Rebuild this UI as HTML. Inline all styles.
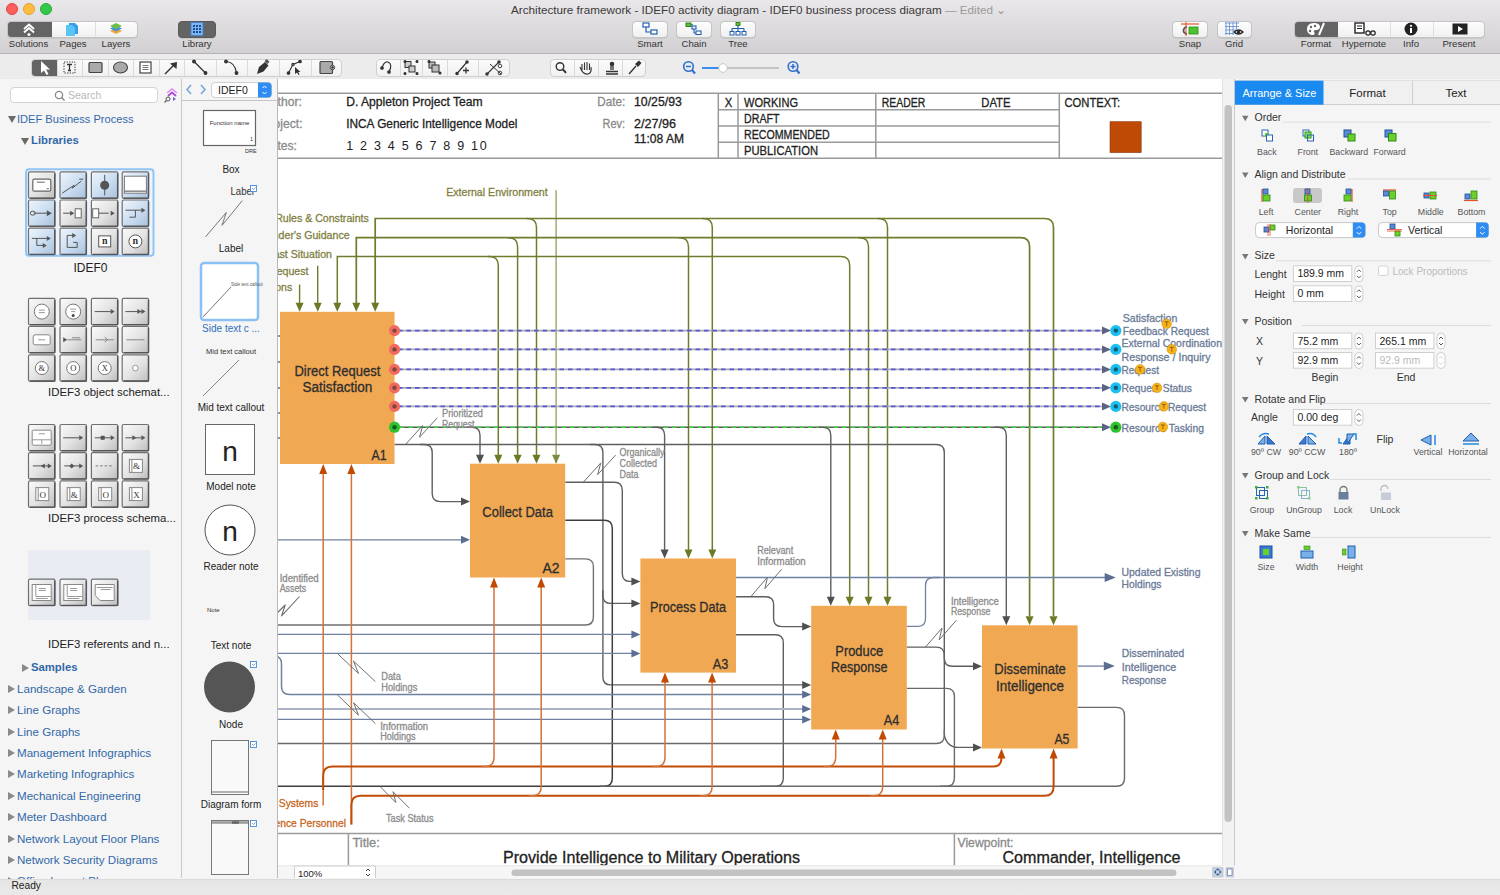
<!DOCTYPE html>
<html><head><meta charset="utf-8">
<style>
*{box-sizing:border-box}
body{margin:0;width:1500px;height:895px;overflow:hidden;position:relative;font-family:"Liberation Sans",sans-serif;background:#f4f4f4;color:#222}
.a{position:absolute}
.tb{position:absolute;left:0;top:0;width:1500px;height:54px;background:linear-gradient(#e9e7e9,#d2d0d2);border-bottom:1px solid #b4b2b4}
.tl{position:absolute;width:12px;height:12px;border-radius:6px;top:3px}
.title{position:absolute;top:3px;left:511px;white-space:nowrap;font-size:11.7px;color:#3a3a3a}
.seg{position:absolute;top:21px;height:17px;background:linear-gradient(#fdfdfd,#f0f0f0);border:1px solid #c4c4c4;border-radius:4px;box-shadow:0 0.5px 0 #bbb}
.lbl{position:absolute;top:38px;font-size:9.6px;color:#333;text-align:center}
.tb2{position:absolute;left:0;top:54px;width:1500px;height:25px;background:#ececec}
.grp{position:absolute;top:59px;height:18px;background:linear-gradient(#fbfbfb,#f1f1f1);border:1px solid #cfcfcf;border-radius:4px}
.sep{position:absolute;top:0;width:1px;height:16px;background:#dadada}
.left{position:absolute;left:0;top:79px;width:181px;height:799px;background:#f5f5f5}
.lib{position:absolute;left:182px;top:79px;width:96px;height:799px;background:#f5f5f5}
.vdiv{position:absolute;width:1px;background:#c8c8c8}
.tree{position:absolute;font-size:11.6px;color:#3268a8;white-space:nowrap}
.tri{position:absolute;width:0;height:0}
.status{position:absolute;left:0;top:879px;width:1500px;height:16px;background:linear-gradient(#e6e6e6,#e9e9e9);border-top:1px solid #dadada}
.rp{position:absolute;left:1233px;top:79px;width:267px;height:799px;background:#f5f5f5}
.sec{position:absolute;font-size:10px;color:#333;white-space:nowrap}
.ic{position:absolute;font-size:8.5px;color:#444;text-align:center;white-space:nowrap}
.inp{position:absolute;height:15px;background:#fff;border:1px solid #c8c8c8;font-size:10px;color:#333;padding-left:5px;line-height:13px}
.stp{position:absolute;width:10px;height:15px;border:1px solid #c8c8c8;border-radius:4px;background:#fff}
.sline{position:absolute;height:1px;background:#dcdcdc}
</style></head><body>
<!-- TOP TOOLBAR -->
<div class="tb">
  <div class="tl" style="left:6px;background:#fc605c;border:0.5px solid #e0443e"></div>
  <div class="tl" style="left:23px;background:#fdbc40;border:0.5px solid #dea236"></div>
  <div class="tl" style="left:40px;background:#34c84a;border:0.5px solid #27aa35"></div>
  <div class="title">Architecture framework - IDEF0 activity diagram - IDEF0 business process diagram <span style="color:#9a9a9a">— Edited ⌄</span></div>
</div>

<!-- toolbar buttons -->
<div class="seg" style="left:7px;width:131px;overflow:hidden">
  <div class="a" style="left:0;top:0;width:44px;height:15px;background:#646464"></div>
  <div class="a" style="left:87px;top:0;width:1px;height:15px;background:#dedede"></div>
</div>
<svg class="a" style="left:21px;top:21px" width="16" height="16" viewBox="0 0 16 16"><path d="M3 8 L8 3.5 L13 8" stroke="#fff" stroke-width="2" fill="none"/><path d="M3 11.5 L8 7 L13 11.5" stroke="#fff" stroke-width="2" fill="none"/><circle cx="8" cy="13.5" r="1.5" fill="#fff"/></svg>
<svg class="a" style="left:65px;top:22px" width="14" height="15" viewBox="0 0 14 15"><path d="M4 1 h6 l3 3 v8 h-9z" fill="#3a9ee6"/><path d="M1 3 h6 l3 3 v8 h-9z" fill="#58c4f7"/></svg>
<svg class="a" style="left:109px;top:22px" width="14" height="14" viewBox="0 0 14 14"><path d="M1 9 l6 -3 l6 3 l-6 3z" fill="#f0a830"/><path d="M1 6.5 l6 -3 l6 3 l-6 3z" fill="#4a90e2"/><path d="M1 4 l6 -3 l6 3 l-6 3z" fill="#6cc04a"/></svg>
<div class="lbl" style="left:0;width:57px">Solutions</div>
<div class="lbl" style="left:51px;width:44px">Pages</div>
<div class="lbl" style="left:94px;width:44px">Layers</div>
<div class="seg" style="left:178px;width:38px;background:#646464;border-color:#5a5a5a"></div>
<svg class="a" style="left:190px;top:22px" width="14" height="14" viewBox="0 0 14 14"><rect x="1" y="0.5" width="12" height="13" fill="#7cb6f2" stroke="#3f7fd0" stroke-width="0.8"/><g fill="#1f4f99"><rect x="3" y="3" width="2" height="2"/><rect x="6" y="3" width="2" height="2"/><rect x="9" y="3" width="2" height="2"/><rect x="3" y="6" width="2" height="2"/><rect x="6" y="6" width="2" height="2"/><rect x="9" y="6" width="2" height="2"/><rect x="3" y="9" width="2" height="2"/><rect x="6" y="9" width="2" height="2"/><rect x="9" y="9" width="2" height="2"/></g></svg>
<div class="lbl" style="left:167px;width:60px">Library</div>

<div class="seg" style="left:632px;width:36px"></div>
<svg class="a" style="left:641px;top:22px" width="18" height="14" viewBox="0 0 18 14"><rect x="2" y="1" width="6" height="4" fill="#fff" stroke="#1f5fb0" stroke-width="1.2"/><rect x="10" y="8" width="6" height="4" fill="#fff" stroke="#1f5fb0" stroke-width="1.2"/><path d="M5 5 v5 h5" stroke="#1f5fb0" stroke-width="1.2" fill="none"/></svg>
<div class="lbl" style="left:620px;width:60px">Smart</div>
<div class="seg" style="left:676px;width:36px"></div>
<svg class="a" style="left:685px;top:22px" width="18" height="14" viewBox="0 0 18 14"><rect x="1" y="1" width="5" height="3.5" fill="#5cbf3a" stroke="#2f7f1a" stroke-width="1"/><rect x="7" y="4" width="4" height="3" fill="#fff" stroke="#1f5fb0" stroke-width="1.1"/><rect x="11" y="9" width="5" height="3.5" fill="#fff" stroke="#1f5fb0" stroke-width="1.1"/><path d="M6 2.7 h2 M9 7 v4 h2" stroke="#1f5fb0" stroke-width="1.1" fill="none"/></svg>
<div class="lbl" style="left:664px;width:60px">Chain</div>
<div class="seg" style="left:720px;width:36px"></div>
<svg class="a" style="left:729px;top:22px" width="18" height="14" viewBox="0 0 18 14"><rect x="7" y="0.5" width="4" height="3" fill="#5cbf3a" stroke="#2f7f1a" stroke-width="0.9"/><path d="M9 3.5 v3 M3 6.5 h12 M3 6.5 v3 M9 6.5 v3 M15 6.5 v3" stroke="#1f5fb0" stroke-width="1.1" fill="none"/><rect x="1" y="9.5" width="4" height="3.5" fill="#fff" stroke="#1f5fb0" stroke-width="1"/><rect x="7" y="9.5" width="4" height="3.5" fill="#fff" stroke="#1f5fb0" stroke-width="1"/><rect x="13" y="9.5" width="4" height="3.5" fill="#fff" stroke="#1f5fb0" stroke-width="1"/></svg>
<div class="lbl" style="left:708px;width:60px">Tree</div>

<div class="seg" style="left:1172px;width:36px"></div>
<svg class="a" style="left:1180px;top:22px" width="20" height="14" viewBox="0 0 20 14"><path d="M1 2 h18" stroke="#e8502a" stroke-width="1.2"/><path d="M7 5 a3.5 3.5 0 1 0 0 7" stroke="#555" stroke-width="1.8" fill="none"/><path d="M6 0 v14" stroke="#e8502a" stroke-width="1"/><rect x="9" y="5" width="9" height="7" fill="#4cc22e" stroke="#2a8a18" stroke-width="0.8"/></svg>
<div class="lbl" style="left:1160px;width:60px">Snap</div>
<div class="seg" style="left:1217px;width:35px"></div>
<svg class="a" style="left:1224px;top:22px" width="20" height="14" viewBox="0 0 20 14"><g stroke="#5a8ad8" stroke-width="0.8"><path d="M1 1 h14 M1 4.5 h14 M1 8 h11 M1 11.5 h9 M2 0 v13 M5.5 0 v13 M9 0 v13 M12.5 0 v7"/></g><path d="M10 10 q4.5 -4 9 0 q-4.5 4 -9 0z" fill="#fff" stroke="#222" stroke-width="1.2"/><circle cx="14.5" cy="10" r="1.6" fill="#222"/></svg>
<div class="lbl" style="left:1204px;width:60px">Grid</div>

<div class="seg" style="left:1294px;width:191px;overflow:hidden">
  <div class="a" style="left:0;top:0;width:43px;height:15px;background:#646464"></div>
  <div class="a" style="left:95px;top:0;width:1px;height:15px;background:#dedede"></div>
  <div class="a" style="left:138px;top:0;width:1px;height:15px;background:#dedede"></div>
</div>
<svg class="a" style="left:1306px;top:22px" width="20" height="14" viewBox="0 0 20 14"><path d="M8 1 C3 1 1 4 1 7 C1 11 4 13 7 13 C9 13 9 11 8 10 C7 9 8 8 10 8 C13 8 14 6 14 5 C14 2 11 1 8 1z" fill="#fff"/><circle cx="5" cy="5" r="1.2" fill="#646464"/><circle cx="9" cy="4" r="1.2" fill="#646464"/><circle cx="4" cy="9" r="1.2" fill="#646464"/><path d="M13 13 L18 1" stroke="#fff" stroke-width="2"/></svg>
<div class="lbl" style="left:1286px;width:60px">Format</div>
<svg class="a" style="left:1354px;top:22px" width="22" height="14" viewBox="0 0 22 14"><rect x="1" y="1" width="9" height="10" fill="#fff" stroke="#222" stroke-width="1.4"/><path d="M3 4 h5 M3 6.5 h5" stroke="#222" stroke-width="1"/><circle cx="14" cy="11" r="2.2" fill="none" stroke="#222" stroke-width="1.2"/><circle cx="19" cy="11" r="2.2" fill="none" stroke="#222" stroke-width="1.2"/></svg>
<div class="lbl" style="left:1334px;width:60px">Hypernote</div>
<svg class="a" style="left:1404px;top:22px" width="14" height="14" viewBox="0 0 14 14"><circle cx="7" cy="7" r="6.5" fill="#222"/><rect x="6" y="6" width="2" height="5" fill="#fff"/><circle cx="7" cy="3.8" r="1.1" fill="#fff"/></svg>
<div class="lbl" style="left:1381px;width:60px">Info</div>
<svg class="a" style="left:1452px;top:23px" width="16" height="12" viewBox="0 0 16 12"><rect x="0.5" y="0.5" width="15" height="11" fill="#222"/><path d="M6 3 L11 6 L6 9z" fill="#fff"/></svg>
<div class="lbl" style="left:1429px;width:60px">Present</div>

<!-- SECOND TOOLBAR -->
<div class="tb2"></div>
<div class="grp" style="left:31px;width:311px;overflow:hidden"><div class="a" style="left:0;top:0;width:24.700000000000003px;height:16px;background:#646464"></div><div class="sep" style="left:24.700000000000003px"></div><div class="sep" style="left:50.400000000000006px"></div><div class="sep" style="left:76px"></div><div class="sep" style="left:101px"></div><div class="sep" style="left:126.6px"></div><div class="sep" style="left:152px"></div><div class="sep" style="left:183.6px"></div><div class="sep" style="left:215px"></div><div class="sep" style="left:246.60000000000002px"></div><div class="sep" style="left:278.7px"></div></div><div class="grp" style="left:376px;width:134px;overflow:hidden"><div class="sep" style="left:22.600000000000023px"></div><div class="sep" style="left:45.39999999999998px"></div><div class="sep" style="left:70.39999999999998px"></div><div class="sep" style="left:101.39999999999998px"></div></div><div class="grp" style="left:550px;width:96px;overflow:hidden"><div class="sep" style="left:23.399999999999977px"></div><div class="sep" style="left:47px"></div><div class="sep" style="left:71px"></div></div>
<svg class="a" style="left:0;top:54px" width="1500" height="25" viewBox="0 54 1500 25">
<g fill="none" stroke="#333" stroke-width="1.3">
<!-- pointer (white on dark) -->
<path d="M41 61 L41 73 L44 70.5 L46.5 75 L48.5 74 L46 69.5 L50 69.5 Z" fill="#fff" stroke="none"/>
<!-- text box -->
<rect x="64" y="62" width="11" height="11" stroke-dasharray="1.3 1.3" stroke-width="1"/>
<path d="M67 64.5 h5 M69.5 64.5 v6 M68 70.5 h3" stroke-width="1.3"/>
<!-- rect -->
<rect x="89" y="62.5" width="13" height="10" fill="#aaa" stroke="#444" stroke-width="1.2" rx="1"/>
<!-- ellipse -->
<ellipse cx="120.5" cy="67.5" rx="7" ry="5.5" fill="#aaa" stroke="#444" stroke-width="1.1"/>
<!-- list -->
<rect x="140" y="62" width="11" height="11" fill="#fff" stroke="#444" stroke-width="1.2"/>
<path d="M142.5 65.5 h6 M142.5 67.5 h6 M142.5 69.5 h6" stroke="#777" stroke-width="1"/>
<!-- arrow -->
<path d="M165 74 L176 63" stroke-width="1.4"/><path d="M177 62 L176.5 69 L170 63.5 Z" fill="#333" stroke="none"/>
<!-- line -->
<path d="M194 61.5 L205.5 73" stroke-width="1.2"/><circle cx="194" cy="61.5" r="1.3" fill="#333"/><circle cx="205.5" cy="73" r="1.3" fill="#333"/>
<!-- arc -->
<path d="M226 61.5 Q235 62 236.5 73" stroke-width="1.2"/><circle cx="226" cy="61.5" r="1.3" fill="#333"/><circle cx="236.5" cy="73" r="1.3" fill="#333"/>
<!-- pen -->
<path d="M257 74 L259 67 L265 62 L268.5 65.5 L263.5 71.5 Z" fill="#333" stroke="none"/><rect x="265" y="60" width="4" height="3" transform="rotate(45 267 61.5)" fill="#555" stroke="none"/>
<!-- bezier -->
<path d="M288.5 73 L293 64.5 L300 61.5" stroke-width="1.1"/><circle cx="288.5" cy="73" r="1.2" fill="#333"/><circle cx="300" cy="61.5" r="1.2" fill="#333"/><circle cx="293" cy="64.5" r="1.1" fill="#fff"/>
<path d="M295 67 L295 74 L297 72.5 L298.5 75 L299.5 74.5 L298.3 72 L300.5 72 Z" fill="#333" stroke="none"/>
<!-- rect with circle -->
<rect x="320" y="61.5" width="12.5" height="12" fill="#aaa" stroke="#444" stroke-width="1.2" rx="1"/><circle cx="332.5" cy="67.5" r="2.2" fill="#fff" stroke="#444" stroke-width="1"/><circle cx="332.5" cy="67.5" r="0.7" fill="#444"/>

<!-- group 2 -->
<path d="M382 68 Q384 61 388 62 Q393 64 389 72" stroke-width="1.2"/><circle cx="382" cy="68" r="1.2" fill="#333"/><circle cx="389" cy="72" r="1.2" fill="#333"/>
<rect x="405" y="61.5" width="6" height="6" fill="#ccc" stroke-width="1"/><rect x="409" y="66" width="6" height="6" fill="#ccc" stroke-width="1"/><circle cx="405" cy="61.5" r="0.9" fill="#333"/><circle cx="417" cy="61.5" r="0.9" fill="#333"/><circle cx="405" cy="73.5" r="0.9" fill="#333"/><circle cx="417" cy="73.5" r="0.9" fill="#333"/>
<rect x="429" y="62" width="6" height="6" fill="#bbb" stroke-width="1"/><rect x="432" y="65" width="7" height="7" fill="#bbb" stroke-width="1"/><circle cx="429" cy="61.5" r="0.9" fill="#333"/><circle cx="440" cy="73" r="0.9" fill="#333"/>
<path d="M457 73.5 L467 62" stroke-width="1.2"/><circle cx="457" cy="73.5" r="1.1" fill="#333"/><circle cx="467" cy="62" r="1.1" fill="#333"/><path d="M466 67.5 v6 M463 70.5 h6" stroke-width="1.3"/>
<path d="M487 74 L499 62" stroke-width="1.1"/><circle cx="487" cy="74" r="1.1" fill="#333"/><circle cx="499" cy="62" r="1.1" fill="#333"/><path d="M490 64 L501 74" stroke-width="1"/><circle cx="500" cy="66" r="1.8" stroke-width="0.9"/><circle cx="500" cy="73" r="1.8" stroke-width="0.9"/>

<!-- group 3 -->
<circle cx="560" cy="66.5" r="3.8" stroke-width="1.4"/><path d="M563 69.5 L566 72.8" stroke-width="2"/>
<path d="M582 70 L582 64 M584.5 70 L584.5 62.5 M587 70 L587 62 M589.5 70 L589.5 63.5 M580 67 Q583 75 588 74 Q592 73 591 67" stroke-width="1.1"/>
<path d="M606 74 h12 M606 71.5 h12" stroke-width="1.6"/><path d="M611 70 v-4 M613 70 v-4" stroke-width="1.3"/><circle cx="612" cy="64" r="2.3" fill="#333" stroke="none"/>
<path d="M629 74 L636 66" stroke-width="1.4"/><path d="M635 64 L639 60.5 L641.5 63 L638 67 Z" fill="#333" stroke="none"/>

<!-- zoom -->
<circle cx="688.5" cy="66.5" r="4.8" stroke="#2f6fd0" stroke-width="1.6"/><path d="M686 66.5 h5" stroke="#2f6fd0" stroke-width="1.5"/><path d="M692 70 L695 73.5" stroke="#2f6fd0" stroke-width="2.2"/>
<path d="M702 68 h21" stroke="#3a8ef0" stroke-width="2"/><path d="M723 68 h56" stroke="#c4c4c4" stroke-width="2"/>
<circle cx="723" cy="68" r="4.3" fill="#fff" stroke="#bdbdbd" stroke-width="0.8"/>
<circle cx="793" cy="66.5" r="4.8" stroke="#2f6fd0" stroke-width="1.6"/><path d="M790.5 66.5 h5 M793 64 v5" stroke="#2f6fd0" stroke-width="1.5"/><path d="M796.5 70 L799.5 73.5" stroke="#2f6fd0" stroke-width="2.2"/>
</g></svg>
<!-- LEFT -->
<div class="left"></div>
<div class="a" style="left:10px;top:87px;width:148px;height:16px;background:#fff;border:1px solid #d4d4d4;border-radius:4px"></div>
<svg class="a" style="left:54px;top:90px" width="12" height="12" viewBox="0 0 12 12"><circle cx="5" cy="5" r="3.6" fill="none" stroke="#888" stroke-width="1.3"/><path d="M7.6 7.6 L10.5 10.5" stroke="#888" stroke-width="1.4"/></svg>
<div class="a" style="left:68px;top:89px;font-size:10.5px;color:#b8b8b8">Search</div>
<svg class="a" style="left:163px;top:86px" width="16" height="18" viewBox="0 0 16 18"><path d="M4 7 L9 3 L14 7" stroke="#d98ef0" stroke-width="1.6" fill="none"/><path d="M5 10 L9 6.5 L13 10" stroke="#b04ad8" stroke-width="1.8" fill="none"/><circle cx="5" cy="13" r="2" fill="none" stroke="#555" stroke-width="1"/><path d="M3.5 14.5 L1.5 16.5" stroke="#555" stroke-width="1.1"/><path d="M10 11 L13 13 L10 15z" fill="#7a5ad8"/></svg>
<div class="tri a" style="left:8px;top:116px;border-left:4px solid transparent;border-right:4px solid transparent;border-top:7px solid #6a6a6a"></div>
<div class="tree" style="left:17px;top:112.5px;font-size:11.1px">IDEF Business Process</div>
<div class="tri a" style="left:21px;top:138px;border-left:4px solid transparent;border-right:4px solid transparent;border-top:7px solid #6a6a6a"></div>
<div class="tree" style="left:31px;top:134px;font-size:11.3px;font-weight:bold">Libraries</div>
<svg class="a" style="left:0;top:160px" width="181" height="460" viewBox="0 160 181 460"><defs><linearGradient id="gg" x1="0" y1="0" x2="1" y2="1"><stop offset="0" stop-color="#fbfbfb"/><stop offset="0.55" stop-color="#e2e2e2"/><stop offset="1" stop-color="#bdbdbd"/></linearGradient><linearGradient id="gb" x1="0" y1="0" x2="1" y2="1"><stop offset="0" stop-color="#f0f6fd"/><stop offset="0.55" stop-color="#c9dcf0"/><stop offset="1" stop-color="#a9c1dc"/></linearGradient></defs><rect x="26.1" y="169.2" width="127.4" height="86.6" rx="3" fill="#eef3f9" stroke="#8ec4f6" stroke-width="2"/><rect x="28.5" y="171.9" width="26.5" height="26.5" rx="1.5" fill="url(#gg)" stroke="#6f6f6f" stroke-width="1.2"/><path d="M54.7 173.4 V198.1 H30.0" stroke="#555" stroke-width="1.3" fill="none"/><rect x="32.8" y="179.2" width="18" height="12" rx="1.5" fill="#fff" stroke="#666" stroke-width="1.2"/><path d="M36.8 182.2 h8 M46.8 188.7 h2" stroke="#666" stroke-width="1"/><rect x="60.0" y="171.9" width="26.5" height="26.5" rx="1.5" fill="url(#gb)" stroke="#6f6f6f" stroke-width="1.2"/><path d="M86.2 173.4 V198.1 H61.5" stroke="#555" stroke-width="1.3" fill="none"/><path d="M62.2 193.2 L74.2 185.2 L72.2 188.2 L81.2 181.2 M79.2 179.2 h4" stroke="#555" fill="none" stroke-width="1"/><rect x="91.4" y="171.9" width="26.5" height="26.5" rx="1.5" fill="url(#gb)" stroke="#6f6f6f" stroke-width="1.2"/><path d="M117.6 173.4 V198.1 H92.9" stroke="#555" stroke-width="1.3" fill="none"/><path d="M104.7 174.9 V195.4" stroke="#555" fill="none" stroke-width="1"/><circle cx="104.7" cy="185.2" r="4.5" fill="#555"/><rect x="122.2" y="171.9" width="26.5" height="26.5" rx="1.5" fill="url(#gb)" stroke="#6f6f6f" stroke-width="1.2"/><path d="M148.4 173.4 V198.1 H123.7" stroke="#555" stroke-width="1.3" fill="none"/><rect x="124.4" y="176.2" width="22" height="17" fill="#fff" stroke="#777" stroke-width="1"/><path d="M124.4 191.2 h22" stroke="#888" stroke-width="1.5"/><rect x="28.5" y="200.0" width="26.5" height="26.5" rx="1.5" fill="url(#gb)" stroke="#6f6f6f" stroke-width="1.2"/><path d="M54.7 201.5 V226.2 H30.0" stroke="#555" stroke-width="1.3" fill="none"/><path d="M33.8 213.2 h14" stroke="#555" fill="none" stroke-width="1"/><path d="M51.8 213.2 l-5 -3 v6z" fill="#555"/><ellipse cx="32.8" cy="213.2" rx="2.5" ry="2" stroke="#555" fill="none" stroke-width="1"/><rect x="60.0" y="200.0" width="26.5" height="26.5" rx="1.5" fill="url(#gg)" stroke="#6f6f6f" stroke-width="1.2"/><path d="M86.2 201.5 V226.2 H61.5" stroke="#555" stroke-width="1.3" fill="none"/><path d="M63.2 213.2 h10" stroke="#555" fill="none" stroke-width="1"/><path d="M74.2 213.2 l-4 -2.5 v5z" fill="#555"/><rect x="75.2" y="208.8" width="6" height="9" fill="#fff" stroke="#666"/><rect x="91.4" y="200.0" width="26.5" height="26.5" rx="1.5" fill="url(#gg)" stroke="#6f6f6f" stroke-width="1.2"/><path d="M117.6 201.5 V226.2 H92.9" stroke="#555" stroke-width="1.3" fill="none"/><rect x="92.7" y="208.8" width="6" height="9" fill="#fff" stroke="#666"/><path d="M98.7 213.2 h10" stroke="#555" fill="none" stroke-width="1"/><path d="M114.7 213.2 l-4 -2.5 v5z" fill="#555"/><rect x="122.2" y="200.0" width="26.5" height="26.5" rx="1.5" fill="url(#gb)" stroke="#6f6f6f" stroke-width="1.2"/><path d="M148.4 201.5 V226.2 H123.7" stroke="#555" stroke-width="1.3" fill="none"/><path d="M125.4 210.2 h16 M135.4 210.2 v7 h-6" stroke="#555" fill="none" stroke-width="1"/><path d="M145.4 210.2 l-4 -2.5 v5z" fill="#555"/><rect x="28.5" y="228.2" width="26.5" height="26.5" rx="1.5" fill="url(#gb)" stroke="#6f6f6f" stroke-width="1.2"/><path d="M54.7 229.7 V254.4 H30.0" stroke="#555" stroke-width="1.3" fill="none"/><path d="M31.8 238.4 h18 M36.8 238.4 v7 h8" stroke="#555" fill="none" stroke-width="1"/><path d="M50.8 238.4 l-4 -2.5 v5z M46.8 245.4 l-4 -2.5 v5z" fill="#555"/><rect x="60.0" y="228.2" width="26.5" height="26.5" rx="1.5" fill="url(#gb)" stroke="#6f6f6f" stroke-width="1.2"/><path d="M86.2 229.7 V254.4 H61.5" stroke="#555" stroke-width="1.3" fill="none"/><path d="M67.2 247.4 v-12 h5 M67.2 247.4 h10 v-5 h-4" stroke="#555" fill="none" stroke-width="1"/><path d="M76.2 235.4 l-4 -2.5 v5z" fill="#555"/><rect x="91.4" y="228.2" width="26.5" height="26.5" rx="1.5" fill="url(#gg)" stroke="#6f6f6f" stroke-width="1.2"/><path d="M117.6 229.7 V254.4 H92.9" stroke="#555" stroke-width="1.3" fill="none"/><rect x="98.7" y="235.9" width="12" height="11" fill="#fff" stroke="#555"/><text x="104.7" y="244.4" font-size="10" font-family='"Liberation Serif",serif' font-weight="bold" fill="#333" text-anchor="middle">n</text><rect x="122.2" y="228.2" width="26.5" height="26.5" rx="1.5" fill="url(#gg)" stroke="#6f6f6f" stroke-width="1.2"/><path d="M148.4 229.7 V254.4 H123.7" stroke="#555" stroke-width="1.3" fill="none"/><circle cx="135.4" cy="241.4" r="6.5" fill="#fff" stroke="#555"/><text x="135.4" y="244.4" font-size="10" font-family='"Liberation Serif",serif' font-weight="bold" fill="#333" text-anchor="middle">n</text><rect x="28.5" y="298.4" width="26.5" height="26.5" rx="1.5" fill="url(#gg)" stroke="#6f6f6f" stroke-width="1.2"/><path d="M54.7 299.9 V324.6 H30.0" stroke="#555" stroke-width="1.3" fill="none"/><circle cx="41.8" cy="311.6" r="7.5" fill="#fff" stroke="#777"/><path d="M38.8 310.1 h6 M38.8 312.6 h6" stroke="#999"/><rect x="60.0" y="298.4" width="26.5" height="26.5" rx="1.5" fill="url(#gg)" stroke="#6f6f6f" stroke-width="1.2"/><path d="M86.2 299.9 V324.6 H61.5" stroke="#555" stroke-width="1.3" fill="none"/><circle cx="73.2" cy="311.6" r="7.5" fill="#fff" stroke="#777"/><path d="M70.2 309.1 h6 M71.2 311.6 h4" stroke="#999"/><circle cx="73.2" cy="315.6" r="1.5" fill="#444"/><rect x="91.4" y="298.4" width="26.5" height="26.5" rx="1.5" fill="url(#gg)" stroke="#6f6f6f" stroke-width="1.2"/><path d="M117.6 299.9 V324.6 H92.9" stroke="#555" stroke-width="1.3" fill="none"/><path d="M94.7 311.6 h16" stroke="#555" fill="none" stroke-width="1"/><path d="M114.7 311.6 l-4 -2.5 v5z" fill="#555"/><rect x="122.2" y="298.4" width="26.5" height="26.5" rx="1.5" fill="url(#gg)" stroke="#6f6f6f" stroke-width="1.2"/><path d="M148.4 299.9 V324.6 H123.7" stroke="#555" stroke-width="1.3" fill="none"/><path d="M125.4 311.6 h16" stroke="#555" fill="none" stroke-width="1"/><path d="M141.4 311.6 l-4 -2.5 v5z M145.4 311.6 l-4 -2.5 v5z" fill="#555"/><rect x="28.5" y="326.5" width="26.5" height="26.5" rx="1.5" fill="url(#gg)" stroke="#6f6f6f" stroke-width="1.2"/><path d="M54.7 328.0 V352.7 H30.0" stroke="#555" stroke-width="1.3" fill="none"/><rect x="33.2" y="334.8" width="17" height="10" rx="2" fill="#fff" stroke="#888"/><path d="M38.2 339.8 h7" stroke="#999"/><rect x="60.0" y="326.5" width="26.5" height="26.5" rx="1.5" fill="url(#gg)" stroke="#6f6f6f" stroke-width="1.2"/><path d="M86.2 328.0 V352.7 H61.5" stroke="#555" stroke-width="1.3" fill="none"/><path d="M63.2 337.2 l4 2.5 l-4 2.5z" fill="#555"/><path d="M67.2 339.8 h14 M72.2 337.8 h8" stroke="#888"/><rect x="91.4" y="326.5" width="26.5" height="26.5" rx="1.5" fill="url(#gg)" stroke="#6f6f6f" stroke-width="1.2"/><path d="M117.6 328.0 V352.7 H92.9" stroke="#555" stroke-width="1.3" fill="none"/><path d="M95.7 339.8 h18 M104.7 337.2 l3 2.5 l-3 2.5" stroke="#888" fill="none"/><rect x="122.2" y="326.5" width="26.5" height="26.5" rx="1.5" fill="url(#gg)" stroke="#6f6f6f" stroke-width="1.2"/><path d="M148.4 328.0 V352.7 H123.7" stroke="#555" stroke-width="1.3" fill="none"/><path d="M126.4 339.8 h18" stroke="#888"/><rect x="28.5" y="354.8" width="26.5" height="26.5" rx="1.5" fill="url(#gg)" stroke="#6f6f6f" stroke-width="1.2"/><path d="M54.7 356.3 V381.0 H30.0" stroke="#555" stroke-width="1.3" fill="none"/><circle cx="41.8" cy="368.1" r="6.5" fill="#fff" stroke="#777"/><text x="41.8" y="371.1" font-size="8.5" font-family='"Liberation Serif",serif' fill="#333" text-anchor="middle">&amp;</text><rect x="60.0" y="354.8" width="26.5" height="26.5" rx="1.5" fill="url(#gg)" stroke="#6f6f6f" stroke-width="1.2"/><path d="M86.2 356.3 V381.0 H61.5" stroke="#555" stroke-width="1.3" fill="none"/><circle cx="73.2" cy="368.1" r="6.5" fill="#fff" stroke="#777"/><text x="73.2" y="371.1" font-size="8.5" font-family='"Liberation Serif",serif' fill="#333" text-anchor="middle">O</text><rect x="91.4" y="354.8" width="26.5" height="26.5" rx="1.5" fill="url(#gg)" stroke="#6f6f6f" stroke-width="1.2"/><path d="M117.6 356.3 V381.0 H92.9" stroke="#555" stroke-width="1.3" fill="none"/><circle cx="104.7" cy="368.1" r="6.5" fill="#fff" stroke="#777"/><text x="104.7" y="371.1" font-size="8.5" font-family='"Liberation Serif",serif' fill="#333" text-anchor="middle">X</text><rect x="122.2" y="354.8" width="26.5" height="26.5" rx="1.5" fill="url(#gg)" stroke="#6f6f6f" stroke-width="1.2"/><path d="M148.4 356.3 V381.0 H123.7" stroke="#555" stroke-width="1.3" fill="none"/><circle cx="135.4" cy="368.1" r="2.8" fill="#fff" stroke="#999"/><rect x="28.5" y="424.5" width="26.5" height="26.5" rx="1.5" fill="url(#gg)" stroke="#6f6f6f" stroke-width="1.2"/><path d="M54.7 426.0 V450.7 H30.0" stroke="#555" stroke-width="1.3" fill="none"/><rect x="32.2" y="430.2" width="19" height="15" rx="1" fill="#fff" stroke="#888"/><path d="M32.2 439.8 h19 M41.8 439.8 v4 M38.8 433.8 h6" stroke="#999"/><rect x="60.0" y="424.5" width="26.5" height="26.5" rx="1.5" fill="url(#gg)" stroke="#6f6f6f" stroke-width="1.2"/><path d="M86.2 426.0 V450.7 H61.5" stroke="#555" stroke-width="1.3" fill="none"/><path d="M63.2 437.8 h16" stroke="#555" fill="none" stroke-width="1"/><path d="M83.2 437.8 l-4 -2.5 v5z" fill="#555"/><rect x="91.4" y="424.5" width="26.5" height="26.5" rx="1.5" fill="url(#gg)" stroke="#6f6f6f" stroke-width="1.2"/><path d="M117.6 426.0 V450.7 H92.9" stroke="#555" stroke-width="1.3" fill="none"/><path d="M94.7 437.8 h16" stroke="#555" fill="none" stroke-width="1"/><rect x="100.7" y="435.8" width="4" height="4" fill="#555"/><path d="M114.7 437.8 l-4 -2.5 v5z" fill="#555"/><rect x="122.2" y="424.5" width="26.5" height="26.5" rx="1.5" fill="url(#gg)" stroke="#6f6f6f" stroke-width="1.2"/><path d="M148.4 426.0 V450.7 H123.7" stroke="#555" stroke-width="1.3" fill="none"/><path d="M125.4 437.8 h16" stroke="#555" fill="none" stroke-width="1"/><path d="M136.4 437.8 l-4 -2.5 v5z M145.4 437.8 l-4 -2.5 v5z" fill="#555"/><rect x="28.5" y="452.6" width="26.5" height="26.5" rx="1.5" fill="url(#gg)" stroke="#6f6f6f" stroke-width="1.2"/><path d="M54.7 454.1 V478.8 H30.0" stroke="#555" stroke-width="1.3" fill="none"/><path d="M32.8 465.9 h16" stroke="#555" fill="none" stroke-width="1"/><path d="M40.8 465.9 l4 -2.5 v5z M51.8 465.9 l-4 -2.5 v5z" fill="#555"/><rect x="60.0" y="452.6" width="26.5" height="26.5" rx="1.5" fill="url(#gg)" stroke="#6f6f6f" stroke-width="1.2"/><path d="M86.2 454.1 V478.8 H61.5" stroke="#555" stroke-width="1.3" fill="none"/><path d="M64.2 465.9 h16" stroke="#555" fill="none" stroke-width="1"/><path d="M69.2 465.9 l2.5 -2.5 l2.5 2.5 l-2.5 2.5z M83.2 465.9 l-4 -2.5 v5z" fill="#555"/><rect x="91.4" y="452.6" width="26.5" height="26.5" rx="1.5" fill="url(#gg)" stroke="#6f6f6f" stroke-width="1.2"/><path d="M117.6 454.1 V478.8 H92.9" stroke="#555" stroke-width="1.3" fill="none"/><path d="M95.7 465.9 h18" stroke="#777" stroke-dasharray="2.5 2"/><rect x="122.2" y="452.6" width="26.5" height="26.5" rx="1.5" fill="url(#gg)" stroke="#6f6f6f" stroke-width="1.2"/><path d="M148.4 454.1 V478.8 H123.7" stroke="#555" stroke-width="1.3" fill="none"/><rect x="129.4" y="459.4" width="13" height="13" fill="#fff" stroke="#888"/><path d="M131.9 459.4 v13" stroke="#888"/><text x="136.4" y="469.4" font-size="9" font-family='"Liberation Serif",serif' fill="#333" text-anchor="middle">&amp;</text><rect x="28.5" y="480.9" width="26.5" height="26.5" rx="1.5" fill="url(#gg)" stroke="#6f6f6f" stroke-width="1.2"/><path d="M54.7 482.4 V507.1 H30.0" stroke="#555" stroke-width="1.3" fill="none"/><rect x="35.8" y="487.6" width="13" height="13" fill="#fff" stroke="#888"/><path d="M38.2 487.6 v13" stroke="#888"/><text x="42.8" y="497.6" font-size="9" font-family='"Liberation Serif",serif' fill="#333" text-anchor="middle">O</text><rect x="60.0" y="480.9" width="26.5" height="26.5" rx="1.5" fill="url(#gg)" stroke="#6f6f6f" stroke-width="1.2"/><path d="M86.2 482.4 V507.1 H61.5" stroke="#555" stroke-width="1.3" fill="none"/><rect x="67.2" y="487.6" width="13" height="13" fill="#fff" stroke="#888"/><path d="M69.8 487.6 v13" stroke="#888"/><text x="74.2" y="497.6" font-size="9" font-family='"Liberation Serif",serif' fill="#333" text-anchor="middle">&amp;</text><rect x="91.4" y="480.9" width="26.5" height="26.5" rx="1.5" fill="url(#gg)" stroke="#6f6f6f" stroke-width="1.2"/><path d="M117.6 482.4 V507.1 H92.9" stroke="#555" stroke-width="1.3" fill="none"/><rect x="98.7" y="487.6" width="13" height="13" fill="#fff" stroke="#888"/><path d="M101.2 487.6 v13" stroke="#888"/><text x="105.7" y="497.6" font-size="9" font-family='"Liberation Serif",serif' fill="#333" text-anchor="middle">O</text><rect x="122.2" y="480.9" width="26.5" height="26.5" rx="1.5" fill="url(#gg)" stroke="#6f6f6f" stroke-width="1.2"/><path d="M148.4 482.4 V507.1 H123.7" stroke="#555" stroke-width="1.3" fill="none"/><rect x="129.4" y="487.6" width="13" height="13" fill="#fff" stroke="#888"/><path d="M131.9 487.6 v13" stroke="#888"/><text x="136.4" y="497.6" font-size="9" font-family='"Liberation Serif",serif' fill="#333" text-anchor="middle">X</text><rect x="28" y="550" width="122" height="82" fill="#e9edf3"/><rect x="28.5" y="579.2" width="26.5" height="26.5" rx="1.5" fill="url(#gg)" stroke="#6f6f6f" stroke-width="1.2"/><path d="M54.7 580.7 V605.4 H30.0" stroke="#555" stroke-width="1.3" fill="none"/><rect x="32.2" y="584.5" width="19" height="16" fill="#fff" stroke="#888"/><path d="M35.8 584.5 v12 h15 M38.8 588.5 h7 M38.8 590.5 h7 M35.8 598.5 h12" stroke="#999" fill="none"/><rect x="60.0" y="579.2" width="26.5" height="26.5" rx="1.5" fill="url(#gg)" stroke="#6f6f6f" stroke-width="1.2"/><path d="M86.2 580.7 V605.4 H61.5" stroke="#555" stroke-width="1.3" fill="none"/><rect x="63.8" y="584.5" width="19" height="16" fill="#fff" stroke="#888"/><path d="M67.2 584.5 v12 h15 M70.2 588.5 h7 M70.2 590.5 h7 M67.2 598.5 h12" stroke="#999" fill="none"/><rect x="91.4" y="579.2" width="26.5" height="26.5" rx="1.5" fill="url(#gg)" stroke="#6f6f6f" stroke-width="1.2"/><path d="M117.6 580.7 V605.4 H92.9" stroke="#555" stroke-width="1.3" fill="none"/><path d="M95.2 584.5 h19 v16 h-14 l-5 -5z" fill="#fff" stroke="#888"/><path d="M96.7 587.5 h16 M100.7 589.5 h10" stroke="#999"/></svg><div class="a" style="left:0;top:261px;width:181px;text-align:center;font-size:12px;color:#222">IDEF0</div><div class="a" style="left:48px;top:386px;font-size:11.4px;color:#222">IDEF3 object schemat...</div><div class="a" style="left:48px;top:512px;font-size:11.4px;color:#222">IDEF3 process schema...</div><div class="a" style="left:48px;top:638px;font-size:11.4px;color:#222">IDEF3 referents and n...</div><div class="tri a" style="left:22px;top:664px;border-top:4px solid transparent;border-bottom:4px solid transparent;border-left:7px solid #8a8a8a"></div><div class="tree" style="left:31px;top:661px;font-size:11.3px;font-weight:bold">Samples</div><div class="tri a" style="left:8px;top:685.0px;border-top:4px solid transparent;border-bottom:4px solid transparent;border-left:7px solid #8a8a8a"></div><div class="tree" style="left:17px;top:682.0px">Landscape &amp; Garden</div><div class="tri a" style="left:8px;top:706.4px;border-top:4px solid transparent;border-bottom:4px solid transparent;border-left:7px solid #8a8a8a"></div><div class="tree" style="left:17px;top:703.4px">Line Graphs</div><div class="tri a" style="left:8px;top:727.7px;border-top:4px solid transparent;border-bottom:4px solid transparent;border-left:7px solid #8a8a8a"></div><div class="tree" style="left:17px;top:724.7px">Line Graphs</div><div class="tri a" style="left:8px;top:749.0px;border-top:4px solid transparent;border-bottom:4px solid transparent;border-left:7px solid #8a8a8a"></div><div class="tree" style="left:17px;top:746.0px">Management Infographics</div><div class="tri a" style="left:8px;top:770.4px;border-top:4px solid transparent;border-bottom:4px solid transparent;border-left:7px solid #8a8a8a"></div><div class="tree" style="left:17px;top:767.4px">Marketing Infographics</div><div class="tri a" style="left:8px;top:791.8px;border-top:4px solid transparent;border-bottom:4px solid transparent;border-left:7px solid #8a8a8a"></div><div class="tree" style="left:17px;top:788.8px">Mechanical Engineering</div><div class="tri a" style="left:8px;top:813.1px;border-top:4px solid transparent;border-bottom:4px solid transparent;border-left:7px solid #8a8a8a"></div><div class="tree" style="left:17px;top:810.1px">Meter Dashboard</div><div class="tri a" style="left:8px;top:834.5px;border-top:4px solid transparent;border-bottom:4px solid transparent;border-left:7px solid #8a8a8a"></div><div class="tree" style="left:17px;top:831.5px">Network Layout Floor Plans</div><div class="tri a" style="left:8px;top:855.8px;border-top:4px solid transparent;border-bottom:4px solid transparent;border-left:7px solid #8a8a8a"></div><div class="tree" style="left:17px;top:852.8px">Network Security Diagrams</div><div class="tri a" style="left:8px;top:877.1px;border-top:4px solid transparent;border-bottom:4px solid transparent;border-left:7px solid #8a8a8a"></div><div class="tree" style="left:17px;top:874.1px">Office Layout Plans</div>
<div class="lib"></div>
<svg class="a" style="left:182px;top:79px" width="96" height="799" viewBox="182 79 96 799" font-family='"Liberation Sans",sans-serif'>
<path d="M191 85 L187 89.5 L191 94" stroke="#7aa6dc" stroke-width="1.6" fill="none"/>
<path d="M201 85 L205 89.5 L201 94" stroke="#7aa6dc" stroke-width="1.6" fill="none"/>
<rect x="211.5" y="82.5" width="60" height="15" rx="3.5" fill="#fff" stroke="#cfcfcf"/>
<path d="M258 82.5 h10 a3.5 3.5 0 0 1 3.5 3.5 v8 a3.5 3.5 0 0 1 -3.5 3.5 h-10z" fill="#2f8cf2"/>
<path d="M262.5 88 l2 -2 l2 2 M262.5 92 l2 2 l2 -2" stroke="#fff" stroke-width="1" fill="none"/>
<text x="218" y="94" font-size="10.5" fill="#222">IDEF0</text>
<path d="M182 100.5 H278" stroke="#c4c4c4"/>
<rect x="203.5" y="110.5" width="52" height="35" fill="#fff" stroke="#666" stroke-width="1.2"/>
<text x="229.5" y="125" font-size="6" fill="#333" text-anchor="middle">Function name</text>
<text x="250" y="141" font-size="5.5" fill="#333">1</text>
<text x="245" y="153" font-size="5.5" fill="#333">DRE</text>
<text x="231" y="173" font-size="10" fill="#222" text-anchor="middle">Box</text>
<text x="230.5" y="195.4" font-size="11" fill="#333" textLength="23.5" lengthAdjust="spacingAndGlyphs">Label</text>
<rect x="250.5" y="185.5" width="6" height="6" fill="#fff" stroke="#4a8ad8" stroke-width="0.9"/><path d="M252 188 l1.5 1.5 l2 -2" stroke="#4a8ad8" stroke-width="0.8" fill="none"/>
<path d="M205.5 236.9 L226.3 212.5 L222 225.4 L242.3 200.7" stroke="#777" stroke-width="1" stroke-linejoin="round" fill="none"/>
<text x="231" y="252" font-size="10" fill="#222" text-anchor="middle">Label</text>
<rect x="201" y="263" width="57" height="57" rx="3" fill="#fff" stroke="#8cc0f4" stroke-width="2.5"/>
<path d="M203 317 L231 287" stroke="#666" stroke-width="0.9"/>
<text x="231" y="286" font-size="4.5" fill="#555">Side text callout</text>
<text x="231" y="332" font-size="10" fill="#2f6fc0" text-anchor="middle">Side text c ...</text>
<text x="231" y="354" font-size="7.5" fill="#333" text-anchor="middle">Mid text callout</text>
<path d="M203 396 L239 360" stroke="#777" stroke-width="0.9"/>
<text x="231" y="411" font-size="10" fill="#222" text-anchor="middle">Mid text callout</text>
<rect x="205.5" y="424.5" width="49" height="50" fill="#fff" stroke="#666" stroke-width="1"/>
<text x="230" y="461" font-size="28" fill="#222" text-anchor="middle">n</text>
<text x="231" y="490" font-size="10" fill="#222" text-anchor="middle">Model note</text>
<circle cx="230" cy="530" r="25" fill="#fff" stroke="#555" stroke-width="1"/>
<text x="230" y="541" font-size="28" fill="#222" text-anchor="middle">n</text>
<text x="231" y="570" font-size="10" fill="#222" text-anchor="middle">Reader note</text>
<text x="207" y="612" font-size="6" fill="#333">Note</text>
<text x="231" y="649" font-size="10" fill="#222" text-anchor="middle">Text note</text>
<circle cx="229.5" cy="687" r="25.5" fill="#555"/>
<rect x="250.5" y="661.5" width="6" height="6" fill="#fff" stroke="#4a8ad8" stroke-width="0.9"/><path d="M252 664 l1.5 1.5 l2 -2" stroke="#4a8ad8" stroke-width="0.8" fill="none"/>
<text x="231" y="728" font-size="10" fill="#222" text-anchor="middle">Node</text>
<rect x="211.5" y="740.5" width="37" height="54" fill="#f9f9f9" stroke="#777" stroke-width="1"/><path d="M212 792 h36" stroke="#999" stroke-width="1.5"/>
<rect x="250.5" y="741.5" width="6" height="6" fill="#fff" stroke="#4a8ad8" stroke-width="0.9"/><path d="M252 744 l1.5 1.5 l2 -2" stroke="#4a8ad8" stroke-width="0.8" fill="none"/>
<text x="231" y="808" font-size="10" fill="#222" text-anchor="middle">Diagram form</text>
<rect x="211.5" y="820.5" width="37" height="54" fill="#f9f9f9" stroke="#777" stroke-width="1"/><path d="M212 822.5 h36" stroke="#999" stroke-width="2.5"/><path d="M232 822.5 h7" stroke="#666" stroke-width="2.5"/>
<rect x="250.5" y="820.5" width="6" height="6" fill="#fff" stroke="#4a8ad8" stroke-width="0.9"/><path d="M252 823 l1.5 1.5 l2 -2" stroke="#4a8ad8" stroke-width="0.8" fill="none"/>
</svg>
<div class="vdiv" style="left:181px;top:79px;height:799px"></div>
<div class="vdiv" style="left:277px;top:79px;height:799px;background:#b8b8b8"></div>
<!-- CANVAS -->
<div class="a" style="left:278px;top:79px;width:944px;height:787px;background:#fff" id="canvas"></div>
<svg class="a" style="left:0;top:0" width="1500" height="895" viewBox="0 0 1500 895" font-family='"Liberation Sans",sans-serif'><defs><clipPath id="cc"><rect x="278" y="79" width="944" height="787"/></clipPath></defs><g clip-path="url(#cc)"><g stroke="#9a9a9a" stroke-width="1.5" fill="none">
<path d="M278 93.2 H1222 M278 158.2 H1222 M718.3 93.2 V158.2 M738 93.2 V158.2 M875.8 93.2 V158.2 M1059.3 93.2 V158.2 M718.3 109.8 H1059.3 M718.3 126 H1059.3 M718.3 142.3 H1059.3"/>
</g>
<text x="262.8" y="106.2" font-size="12.5" fill="#8a8a8a" text-anchor="start" font-weight="normal" textLength="39.0" lengthAdjust="spacingAndGlyphs" stroke="#8a8a8a" stroke-width="0.30">Author:</text>
<text x="261.5" y="128.2" font-size="12.5" fill="#8a8a8a" text-anchor="start" font-weight="normal" textLength="41.0" lengthAdjust="spacingAndGlyphs" stroke="#8a8a8a" stroke-width="0.30">Project:</text>
<text x="262.0" y="149.5" font-size="12.5" fill="#8a8a8a" text-anchor="start" font-weight="normal" textLength="35.0" lengthAdjust="spacingAndGlyphs" stroke="#8a8a8a" stroke-width="0.30">Notes:</text>
<text x="346.2" y="106.4" font-size="12.5" fill="#222" text-anchor="start" font-weight="normal" textLength="136.5" lengthAdjust="spacingAndGlyphs" stroke="#222" stroke-width="0.30">D. Appleton Project Team</text>
<text x="346.2" y="128.2" font-size="12.5" fill="#222" text-anchor="start" font-weight="normal" textLength="171.2" lengthAdjust="spacingAndGlyphs" stroke="#222" stroke-width="0.30">INCA Generic Intelligence Model</text>
<text x="346.2" y="149.5" font-size="12.5" fill="#222" textLength="140.5" lengthAdjust="spacing">1 2 3 4 5 6 7 8 9 10</text>
<text x="597.2" y="106.0" font-size="12.5" fill="#8a8a8a" text-anchor="start" font-weight="normal" textLength="28.0" lengthAdjust="spacingAndGlyphs" stroke="#8a8a8a" stroke-width="0.30">Date:</text>
<text x="634.0" y="106.0" font-size="12.5" fill="#222" text-anchor="start" font-weight="normal" textLength="47.8" lengthAdjust="spacingAndGlyphs" stroke="#222" stroke-width="0.30">10/25/93</text>
<text x="602.5" y="128.0" font-size="12.5" fill="#8a8a8a" text-anchor="start" font-weight="normal" textLength="22.5" lengthAdjust="spacingAndGlyphs" stroke="#8a8a8a" stroke-width="0.30">Rev:</text>
<text x="634.0" y="128.0" font-size="12.5" fill="#222" text-anchor="start" font-weight="normal" textLength="42.0" lengthAdjust="spacingAndGlyphs" stroke="#222" stroke-width="0.30">2/27/96</text>
<text x="634.0" y="142.5" font-size="12.5" fill="#222" text-anchor="start" font-weight="normal" textLength="50.0" lengthAdjust="spacingAndGlyphs" stroke="#222" stroke-width="0.30">11:08 AM</text>
<text x="724.7" y="106.5" font-size="12.5" fill="#222" text-anchor="start" font-weight="normal" textLength="7.5" lengthAdjust="spacingAndGlyphs" stroke="#222" stroke-width="0.30">X</text>
<text x="744.0" y="106.5" font-size="12.5" fill="#222" text-anchor="start" font-weight="normal" textLength="54.0" lengthAdjust="spacingAndGlyphs" stroke="#222" stroke-width="0.30">WORKING</text>
<text x="744.0" y="123.2" font-size="12.5" fill="#222" text-anchor="start" font-weight="normal" textLength="35.5" lengthAdjust="spacingAndGlyphs" stroke="#222" stroke-width="0.30">DRAFT</text>
<text x="744.0" y="139.4" font-size="12.5" fill="#222" text-anchor="start" font-weight="normal" textLength="85.7" lengthAdjust="spacingAndGlyphs" stroke="#222" stroke-width="0.30">RECOMMENDED</text>
<text x="744.0" y="155.4" font-size="12.5" fill="#222" text-anchor="start" font-weight="normal" textLength="74.0" lengthAdjust="spacingAndGlyphs" stroke="#222" stroke-width="0.30">PUBLICATION</text>
<text x="881.7" y="106.5" font-size="12.5" fill="#222" text-anchor="start" font-weight="normal" textLength="43.5" lengthAdjust="spacingAndGlyphs" stroke="#222" stroke-width="0.30">READER</text>
<text x="981.3" y="106.7" font-size="12.5" fill="#222" text-anchor="start" font-weight="normal" textLength="29.2" lengthAdjust="spacingAndGlyphs" stroke="#222" stroke-width="0.30">DATE</text>
<text x="1064.5" y="106.7" font-size="12.5" fill="#222" text-anchor="start" font-weight="normal" textLength="55.5" lengthAdjust="spacingAndGlyphs" stroke="#222" stroke-width="0.30">CONTEXT:</text>
<rect x="1110" y="121.7" width="31.2" height="30.9" fill="#bf4a05" stroke="#8a3a10" stroke-width="0.6"/>
<text x="446.2" y="195.5" font-size="11.2" fill="#7f7f42" text-anchor="start" font-weight="normal" textLength="101.5" lengthAdjust="spacingAndGlyphs" stroke="#7f7f42" stroke-width="0.30">External Environment</text>
<text x="229.2" y="221.8" font-size="11.2" fill="#7f7f42" text-anchor="start" font-weight="normal" textLength="139.6" lengthAdjust="spacingAndGlyphs" stroke="#7f7f42" stroke-width="0.30">Business Rules &amp; Constraints</text>
<text x="235.6" y="239.4" font-size="11.2" fill="#7f7f42" text-anchor="start" font-weight="normal" textLength="114.0" lengthAdjust="spacingAndGlyphs" stroke="#7f7f42" stroke-width="0.30">Commander's Guidance</text>
<text x="246.6" y="257.8" font-size="11.2" fill="#7f7f42" text-anchor="start" font-weight="normal" textLength="85.4" lengthAdjust="spacingAndGlyphs" stroke="#7f7f42" stroke-width="0.30">Forecast Situation</text>
<text x="212.5" y="274.9" font-size="11.2" fill="#7f7f42" text-anchor="start" font-weight="normal" textLength="96.0" lengthAdjust="spacingAndGlyphs" stroke="#7f7f42" stroke-width="0.30">Intelligence Request</text>
<text x="240.5" y="290.5" font-size="11.2" fill="#7f7f42" text-anchor="start" font-weight="normal" textLength="51.8" lengthAdjust="spacingAndGlyphs" stroke="#7f7f42" stroke-width="0.30">Operations</text>
<path d="M556.1 190.2 V454" fill="none" stroke="#9aa36a" stroke-width="1.4"/>
<path d="M556.1 454.0 L556.1 463.0" fill="none" stroke="#9aa36a" stroke-width="1.4" />
<path d="M375.2 303 V218.5 H1044.5 Q1053.5 218.5 1053.5 227.5 V616" fill="none" stroke="#6f7c2c" stroke-width="1.7"/>
<path d="M526.5 218.5 L527.5 218.5 Q536.5 218.5 536.5 227.5 L536.5 455.7" fill="none" stroke="#6f7c2c" stroke-width="1.5" />
<path d="M702.3 218.5 L703.3 218.5 Q712.3 218.5 712.3 227.5 L712.3 550.5" fill="none" stroke="#6f7c2c" stroke-width="1.5" />
<path d="M877.5 218.5 L878.5 218.5 Q887.5 218.5 887.5 227.5 L887.5 597.8" fill="none" stroke="#6f7c2c" stroke-width="1.5" />
<path d="M356.3 303 V237.7 H1020.6 Q1029.6 237.7 1029.6 246.7 V616" fill="none" stroke="#6f7c2c" stroke-width="1.7"/>
<path d="M507.6 237.7 L508.6 237.7 Q517.6 237.7 517.6 246.7 L517.6 455.7" fill="none" stroke="#6f7c2c" stroke-width="1.5" />
<path d="M678.5 237.7 L679.5 237.7 Q688.5 237.7 688.5 246.7 L688.5 550.5" fill="none" stroke="#6f7c2c" stroke-width="1.5" />
<path d="M858.5 237.7 L859.5 237.7 Q868.5 237.7 868.5 246.7 L868.5 597.8" fill="none" stroke="#6f7c2c" stroke-width="1.5" />
<path d="M337.3 303 V256.5 H840.7 Q849.7 256.5 849.7 265.5 V597" fill="none" stroke="#6f7c2c" stroke-width="1.5"/>
<path d="M488.0 256.5 L489.3 256.5 Q498.3 256.5 498.3 265.5 L498.3 455.7" fill="none" stroke="#6f7c2c" stroke-width="1.5" />
<path d="M317.7 265.8 V303 M299.6 284.6 V303" stroke="#6f7c2c" stroke-width="1.4" fill="none"/>
<polygon points="299.6,311.8 295.6,302.8 303.6,302.8" fill="#6b7a25"/>
<polygon points="317.7,311.8 313.7,302.8 321.7,302.8" fill="#6b7a25"/>
<polygon points="337.3,311.8 333.3,302.8 341.3,302.8" fill="#6b7a25"/>
<polygon points="356.3,311.8 352.3,302.8 360.3,302.8" fill="#6b7a25"/>
<polygon points="375.2,311.8 371.2,302.8 379.2,302.8" fill="#6b7a25"/>
<polygon points="498.3,463.7 494.3,454.7 502.3,454.7" fill="#6b7a25"/>
<polygon points="517.6,463.7 513.6,454.7 521.6,454.7" fill="#6b7a25"/>
<polygon points="536.5,463.7 532.5,454.7 540.5,454.7" fill="#6b7a25"/>
<polygon points="556.1,463.7 552.1,454.7 560.1,454.7" fill="#7d8a40"/>
<polygon points="688.5,558.5 684.5,549.5 692.5,549.5" fill="#6b7a25"/>
<polygon points="712.3,558.5 708.3,549.5 716.3,549.5" fill="#6b7a25"/>
<polygon points="849.7,605.8 845.7,596.8 853.7,596.8" fill="#6b7a25"/>
<polygon points="868.5,605.8 864.5,596.8 872.5,596.8" fill="#6b7a25"/>
<polygon points="887.5,605.8 883.5,596.8 891.5,596.8" fill="#6b7a25"/>
<polygon points="1029.6,625.3 1025.6,616.3 1033.6,616.3" fill="#6b7a25"/>
<polygon points="1053.5,625.3 1049.5,616.3 1057.5,616.3" fill="#6b7a25"/>
<path d="M394.5 330.6 H1108" stroke="#a9a9b2" stroke-width="1.7" fill="none"/>
<path d="M398 330.6 H1108" stroke="#5757d2" stroke-width="1.7" stroke-dasharray="4.5 4" fill="none"/>
<polygon points="1111.0,330.6 1102.0,326.6 1102.0,334.6" fill="#5b6485"/>
<circle cx="1115.8" cy="330.6" r="5.6" fill="#19c0f0"/><circle cx="1115.8" cy="330.6" r="2.2" fill="#1a5a78"/>
<path d="M394.5 349.4 H1108" stroke="#a9a9b2" stroke-width="1.7" fill="none"/>
<path d="M398 349.4 H1108" stroke="#5757d2" stroke-width="1.7" stroke-dasharray="4.5 4" fill="none"/>
<polygon points="1111.0,349.4 1102.0,345.4 1102.0,353.4" fill="#5b6485"/>
<circle cx="1115.8" cy="349.4" r="5.6" fill="#19c0f0"/><circle cx="1115.8" cy="349.4" r="2.2" fill="#1a5a78"/>
<path d="M394.5 369.4 H1108" stroke="#a9a9b2" stroke-width="1.7" fill="none"/>
<path d="M398 369.4 H1108" stroke="#5757d2" stroke-width="1.7" stroke-dasharray="4.5 4" fill="none"/>
<polygon points="1111.0,369.4 1102.0,365.4 1102.0,373.4" fill="#5b6485"/>
<circle cx="1115.8" cy="369.4" r="5.6" fill="#19c0f0"/><circle cx="1115.8" cy="369.4" r="2.2" fill="#1a5a78"/>
<path d="M394.5 387.8 H1108" stroke="#a9a9b2" stroke-width="1.7" fill="none"/>
<path d="M398 387.8 H1108" stroke="#5757d2" stroke-width="1.7" stroke-dasharray="4.5 4" fill="none"/>
<polygon points="1111.0,387.8 1102.0,383.8 1102.0,391.8" fill="#5b6485"/>
<circle cx="1115.8" cy="387.8" r="5.6" fill="#19c0f0"/><circle cx="1115.8" cy="387.8" r="2.2" fill="#1a5a78"/>
<path d="M394.5 406.4 H1108" stroke="#a9a9b2" stroke-width="1.7" fill="none"/>
<path d="M398 406.4 H1108" stroke="#5757d2" stroke-width="1.7" stroke-dasharray="4.5 4" fill="none"/>
<polygon points="1111.0,406.4 1102.0,402.4 1102.0,410.4" fill="#5b6485"/>
<circle cx="1115.8" cy="406.4" r="5.6" fill="#19c0f0"/><circle cx="1115.8" cy="406.4" r="2.2" fill="#1a5a78"/>
<path d="M394.5 427.2 H1108" stroke="#5a5a5a" stroke-width="1.4" fill="none"/>
<path d="M400 427.2 H1108" stroke="#3cd03c" stroke-width="1.4" stroke-dasharray="4.5 4" fill="none"/>
<polygon points="1111.0,427.2 1102.0,423.2 1102.0,431.2" fill="#5b6485"/>
<circle cx="1115.8" cy="427.2" r="5.6" fill="#2ec22e"/><circle cx="1115.8" cy="427.2" r="2.2" fill="#1a5a1a"/>
<text x="1122.8" y="321.9" font-size="10.5" fill="#6b7b98" text-anchor="start" font-weight="normal" textLength="54.5" lengthAdjust="spacingAndGlyphs" stroke="#6b7b98" stroke-width="0.30">Satisfaction</text>
<text x="1122.8" y="334.5" font-size="10.5" fill="#6b7b98" text-anchor="start" font-weight="normal" textLength="86.0" lengthAdjust="spacingAndGlyphs" stroke="#6b7b98" stroke-width="0.30">Feedback Request</text>
<text x="1121.5" y="347.2" font-size="10.5" fill="#6b7b98" text-anchor="start" font-weight="normal" textLength="100.5" lengthAdjust="spacingAndGlyphs" stroke="#6b7b98" stroke-width="0.30">External Coordination</text>
<text x="1121.5" y="361.2" font-size="10.5" fill="#6b7b98" text-anchor="start" font-weight="normal" textLength="89.0" lengthAdjust="spacingAndGlyphs" stroke="#6b7b98" stroke-width="0.30">Response / Inquiry</text>
<text x="1121.5" y="373.8" font-size="10.5" fill="#6b7b98" text-anchor="start" font-weight="normal" textLength="37.5" lengthAdjust="spacingAndGlyphs" stroke="#6b7b98" stroke-width="0.30">Request</text>
<text x="1121.5" y="392.4" font-size="10.5" fill="#6b7b98" text-anchor="start" font-weight="normal" textLength="70.5" lengthAdjust="spacingAndGlyphs" stroke="#6b7b98" stroke-width="0.30">Request Status</text>
<text x="1121.5" y="410.8" font-size="10.5" fill="#6b7b98" text-anchor="start" font-weight="normal" textLength="84.5" lengthAdjust="spacingAndGlyphs" stroke="#6b7b98" stroke-width="0.30">Resource Request</text>
<text x="1121.5" y="431.7" font-size="10.5" fill="#6b7b98" text-anchor="start" font-weight="normal" textLength="82.5" lengthAdjust="spacingAndGlyphs" stroke="#6b7b98" stroke-width="0.30">Resource Tasking</text>
<circle cx="1166.7" cy="323.8" r="4.8" fill="#f5b21c" stroke="#d08a00" stroke-width="0.5"/><path d="M1164.7 321.8 h4 M1166.7 321.8 v4.2" stroke="#7a5000" stroke-width="0.8"/>
<circle cx="1171.8" cy="349.4" r="4.8" fill="#f5b21c" stroke="#d08a00" stroke-width="0.5"/><path d="M1169.8 347.4 h4 M1171.8 347.4 v4.2" stroke="#7a5000" stroke-width="0.8"/>
<circle cx="1140.1" cy="369.4" r="4.8" fill="#f5b21c" stroke="#d08a00" stroke-width="0.5"/><path d="M1138.1 367.4 h4 M1140.1 367.4 v4.2" stroke="#7a5000" stroke-width="0.8"/>
<circle cx="1157.0" cy="387.8" r="4.8" fill="#f5b21c" stroke="#d08a00" stroke-width="0.5"/><path d="M1155.0 385.8 h4 M1157.0 385.8 v4.2" stroke="#7a5000" stroke-width="0.8"/>
<circle cx="1163.9" cy="406.4" r="4.8" fill="#f5b21c" stroke="#d08a00" stroke-width="0.5"/><path d="M1161.9 404.4 h4 M1163.9 404.4 v4.2" stroke="#7a5000" stroke-width="0.8"/>
<circle cx="1162.9" cy="427.0" r="4.8" fill="#f5b21c" stroke="#d08a00" stroke-width="0.5"/><path d="M1160.9 425.0 h4 M1162.9 425.0 v4.2" stroke="#7a5000" stroke-width="0.8"/>
<path d="M468.0 427.2 L472.0 427.2 Q480.0 427.2 480.0 435.2 L480.0 455.7" fill="none" stroke="#5f5f5f" stroke-width="1.4" />
<polygon points="480.0,463.7 476.0,454.7 484.0,454.7" fill="#4f4f4f"/>
<path d="M652.6 427.2 L656.6 427.2 Q664.6 427.2 664.6 435.2 L664.6 550.5" fill="none" stroke="#5f5f5f" stroke-width="1.4" />
<polygon points="664.6,558.5 660.6,549.5 668.6,549.5" fill="#4f4f4f"/>
<path d="M818.8 427.2 L822.8 427.2 Q830.8 427.2 830.8 435.2 L830.8 597.8" fill="none" stroke="#5f5f5f" stroke-width="1.4" />
<polygon points="830.8,605.8 826.8,596.8 834.8,596.8" fill="#4f4f4f"/>
<path d="M994.3 427.2 L998.3 427.2 Q1006.3 427.2 1006.3 435.2 L1006.3 617.3" fill="none" stroke="#5f5f5f" stroke-width="1.4" />
<polygon points="1006.3,625.3 1002.3,616.3 1010.3,616.3" fill="#4f4f4f"/>
<path d="M394.5 444.5 L936.3 444.5 Q944.3 444.5 944.3 452.5 L944.3 733.3 Q944.3 739.0 948.1 743.2 L948.1 743.2 Q952.0 747.4 957.7 747.4 L975.0 747.4" fill="none" stroke="#5f5f5f" stroke-width="1.4" />
<path d="M420.0 444.5 L424.2 444.5 Q432.2 444.5 432.2 452.5 L432.2 493.6 Q432.2 501.6 440.2 501.6 L465.0 501.6" fill="none" stroke="#5f5f5f" stroke-width="1.4" />
<path d="M590.0 444.5 L594.9 444.5 Q602.9 444.5 602.9 452.5 L602.9 676.9 Q602.9 684.9 610.9 684.9 L805.0 684.9" fill="none" stroke="#5f5f5f" stroke-width="1.4" />
<path d="M602.9 590.0 L602.9 595.4 Q602.9 603.4 610.9 603.4 L635.0 603.4" fill="none" stroke="#5f5f5f" stroke-width="1.4" />
<polygon points="470.0,501.6 461.0,497.6 461.0,505.6" fill="#4f4f4f"/>
<polygon points="640.4,603.4 631.4,599.4 631.4,607.4" fill="#4f4f4f"/>
<polygon points="811.2,684.9 802.2,680.9 802.2,688.9" fill="#4f4f4f"/>
<polygon points="982.0,747.4 973.0,743.4 973.0,751.4" fill="#4f4f4f"/>
<path d="M565.2 482.3 L614.3 482.3 Q622.3 482.3 622.3 490.3 L622.3 573.4 Q622.3 581.4 630.3 581.4 L635.0 581.4" fill="none" stroke="#5f5f5f" stroke-width="1.4" />
<polygon points="640.4,581.4 631.4,577.4 631.4,585.4" fill="#4f4f4f"/>
<path d="M565.2 520.3 L604.3 520.3 Q612.3 520.3 612.3 528.3 L612.3 778.2 Q612.3 786.2 604.3 786.2 L278.0 786.2" fill="none" stroke="#3e3e3e" stroke-width="1.5" />
<path d="M565.2 558.9 L585.4 558.9 Q593.4 558.9 593.4 566.9 L593.4 617.0 Q593.4 625.0 585.4 625.0 L278.0 625.0" fill="none" stroke="#707070" stroke-width="1.4" />
<path d="M736.0 596.7 L765.6 596.7 Q773.6 596.7 773.6 604.7 L773.6 618.6 Q773.6 626.6 781.6 626.6 L805.0 626.6" fill="none" stroke="#5f5f5f" stroke-width="1.4" />
<polygon points="811.2,626.6 802.2,622.6 802.2,630.6" fill="#4f4f4f"/>
<path d="M736.0 634.7 L775.3 634.7 Q783.3 634.7 783.3 642.7 L783.3 778.2 Q783.3 786.2 775.3 786.2 L600.0 786.2" fill="none" stroke="#5f5f5f" stroke-width="1.4" />
<path d="M906.8 647.1 L936.3 647.1 Q944.3 647.1 944.3 655.1 L944.3 658.2 Q944.3 666.2 952.3 666.2 L975.0 666.2" fill="none" stroke="#5f5f5f" stroke-width="1.4" />
<polygon points="982.0,666.2 973.0,662.2 973.0,670.2" fill="#4f4f4f"/>
<path d="M906.8 688.4 L946.4 688.4 Q954.4 688.4 954.4 696.4 L954.4 778.2 Q954.4 786.2 946.4 786.2 L760.0 786.2" fill="none" stroke="#6a6a6a" stroke-width="1.4" />
<path d="M1077.6 707.4 L1116.5 707.4 Q1124.5 707.4 1124.5 715.4 L1124.5 778.3 Q1124.5 786.3 1116.5 786.3 L940.0 786.3" fill="none" stroke="#6a6a6a" stroke-width="1.4" />
<path d="M278.0 743.5 L936.3 743.5 Q944.3 743.5 944.3 735.5 L944.3 730.0" fill="none" stroke="#6a6a6a" stroke-width="1.4" />
<path d="M278.0 539.8 L465.0 539.8" fill="none" stroke="#7080a0" stroke-width="1.3" />
<polygon points="470.0,539.8 461.0,535.8 461.0,543.8" fill="#5b6e91"/>
<path d="M278.0 634.4 L635.0 634.4" fill="none" stroke="#7080a0" stroke-width="1.3" />
<polygon points="640.4,634.4 631.4,630.4 631.4,638.4" fill="#5b6e91"/>
<path d="M278.0 653.4 L635.0 653.4" fill="none" stroke="#7080a0" stroke-width="1.3" />
<polygon points="640.4,653.4 631.4,649.4 631.4,657.4" fill="#5b6e91"/>
<path d="M270.0 656.0 L273.5 656.0 Q281.5 656.0 281.5 664.0 L281.5 686.6 Q281.5 694.6 289.5 694.6 L805.0 694.6" fill="none" stroke="#7080a0" stroke-width="1.5" />
<polygon points="811.2,694.6 802.2,690.6 802.2,698.6" fill="#5b6e91"/>
<path d="M278.0 709.0 L805.0 709.0" fill="none" stroke="#aab4c6" stroke-width="2.2" />
<polygon points="811.2,709.0 802.2,705.0 802.2,713.0" fill="#5b6e91"/>
<path d="M278.0 719.4 L805.0 719.4" fill="none" stroke="#7080a0" stroke-width="1.3" />
<polygon points="811.2,719.4 802.2,715.4 802.2,723.4" fill="#5b6e91"/>
<path d="M736.0 577.5 L1108.0 577.5" fill="none" stroke="#7080a0" stroke-width="1.3" />
<polygon points="1115.7,577.5 1104.7,573.0 1104.7,582.0" fill="#5b6e91"/>
<path d="M906.8 626.4 L917.5 626.4 Q925.5 626.4 925.5 618.4 L925.5 585.5 Q925.5 577.5 933.5 577.5 L940.0 577.5" fill="none" stroke="#7080a0" stroke-width="1.3" />
<text x="1121.5" y="575.5" font-size="10.5" fill="#6b7b98" text-anchor="start" font-weight="normal" textLength="79.0" lengthAdjust="spacingAndGlyphs" stroke="#6b7b98" stroke-width="0.30">Updated Existing</text>
<text x="1121.5" y="588.0" font-size="10.5" fill="#6b7b98" text-anchor="start" font-weight="normal" textLength="40.0" lengthAdjust="spacingAndGlyphs" stroke="#6b7b98" stroke-width="0.30">Holdings</text>
<path d="M1077.6 666.1 L1108.0 666.1" fill="none" stroke="#7080a0" stroke-width="1.3" />
<polygon points="1114.8,666.1 1103.8,661.6 1103.8,670.6" fill="#5b6e91"/>
<text x="1121.8" y="657.4" font-size="10.5" fill="#6b7b98" text-anchor="start" font-weight="normal" textLength="62.5" lengthAdjust="spacingAndGlyphs" stroke="#6b7b98" stroke-width="0.30">Disseminated</text>
<text x="1121.8" y="670.6" font-size="10.5" fill="#6b7b98" text-anchor="start" font-weight="normal" textLength="54.5" lengthAdjust="spacingAndGlyphs" stroke="#6b7b98" stroke-width="0.30">Intelligence</text>
<text x="1121.8" y="683.8" font-size="10.5" fill="#6b7b98" text-anchor="start" font-weight="normal" textLength="44.5" lengthAdjust="spacingAndGlyphs" stroke="#6b7b98" stroke-width="0.30">Response</text>
<path d="M278 336.0 h2.5" stroke="#5b6e91" stroke-width="1.5"/>
<path d="M278 362.0 h2.5" stroke="#5b6e91" stroke-width="1.5"/>
<path d="M278 388.0 h2.5" stroke="#5b6e91" stroke-width="1.5"/>
<path d="M278 413.0 h2.5" stroke="#5b6e91" stroke-width="1.5"/>
<path d="M278 438.0 h2.5" stroke="#5b6e91" stroke-width="1.5"/>
<path d="M323.2 473 V805.6 M351.4 473 V824.6" stroke="#d27339" stroke-width="1.5" fill="none"/>
<path d="M323.2 790.0 L323.2 775.5 Q323.2 766.5 332.2 766.5 L993.0 766.5 Q1001.5 766.5 1001.5 758.0 L1001.5 758.0" fill="none" stroke="#c24c06" stroke-width="2" />
<path d="M351.4 824.6 L351.4 804.8 Q351.4 795.8 360.4 795.8 L1044.6 795.8 Q1053.6 795.8 1053.6 786.8 L1053.6 758.0" fill="none" stroke="#c24c06" stroke-width="2" />
<path d="M494.0 585.5 L494.0 757.5 Q494.0 766.5 485.0 766.5 L482.0 766.5" fill="none" stroke="#d27339" stroke-width="1.5" />
<path d="M665.0 680.6 L665.0 757.5 Q665.0 766.5 656.0 766.5 L653.0 766.5" fill="none" stroke="#d27339" stroke-width="1.5" />
<path d="M835.7 737.5 L835.7 757.5 Q835.7 766.5 826.7 766.5 L823.7 766.5" fill="none" stroke="#d27339" stroke-width="1.5" />
<path d="M541.2 585.5 L541.2 786.8 Q541.2 795.8 532.2 795.8 L529.2 795.8" fill="none" stroke="#d27339" stroke-width="1.5" />
<path d="M712.1 680.6 L712.1 786.8 Q712.1 795.8 703.1 795.8 L700.1 795.8" fill="none" stroke="#d27339" stroke-width="1.5" />
<path d="M882.7 737.5 L882.7 786.8 Q882.7 795.8 873.7 795.8 L870.7 795.8" fill="none" stroke="#d27339" stroke-width="1.5" />
<polygon points="323.2,464.0 319.2,474.0 327.2,474.0" fill="#c24a00"/>
<polygon points="351.4,464.0 347.4,474.0 355.4,474.0" fill="#c24a00"/>
<polygon points="494.0,577.5 490.0,587.5 498.0,587.5" fill="#c24a00"/>
<polygon points="541.2,577.5 537.2,587.5 545.2,587.5" fill="#c24a00"/>
<polygon points="665.0,672.6 661.0,682.6 669.0,682.6" fill="#c24a00"/>
<polygon points="712.1,672.6 708.1,682.6 716.1,682.6" fill="#c24a00"/>
<polygon points="835.7,729.5 831.7,739.5 839.7,739.5" fill="#c24a00"/>
<polygon points="882.7,729.5 878.7,739.5 886.7,739.5" fill="#c24a00"/>
<polygon points="1001.5,748.5 997.5,758.5 1005.5,758.5" fill="#c24a00"/>
<polygon points="1053.6,748.5 1049.6,758.5 1057.6,758.5" fill="#c24a00"/>
<text x="223.8" y="807.2" font-size="11.2" fill="#c8661c" text-anchor="start" font-weight="normal" textLength="94.5" lengthAdjust="spacingAndGlyphs" stroke="#c8661c" stroke-width="0.30">Intelligence Systems</text>
<text x="244.7" y="827.0" font-size="11.2" fill="#c8661c" text-anchor="start" font-weight="normal" textLength="101.3" lengthAdjust="spacingAndGlyphs" stroke="#c8661c" stroke-width="0.30">Intelligence Personnel</text>
<rect x="280.0" y="311.8" width="114.5" height="152.2" fill="#f1a853"/>
<rect x="470.0" y="463.7" width="95.2" height="113.8" fill="#f1a853"/>
<rect x="640.4" y="558.5" width="95.6" height="114.1" fill="#f1a853"/>
<rect x="811.2" y="605.8" width="95.6" height="123.7" fill="#f1a853"/>
<rect x="982.0" y="625.3" width="95.6" height="123.2" fill="#f1a853"/>
<text x="337.4" y="376.0" font-size="14" fill="#2e2e2e" text-anchor="middle" font-weight="normal" textLength="86.0" lengthAdjust="spacingAndGlyphs" stroke="#2e2e2e" stroke-width="0.30">Direct Request</text>
<text x="337.4" y="391.5" font-size="14" fill="#2e2e2e" text-anchor="middle" font-weight="normal" textLength="70.0" lengthAdjust="spacingAndGlyphs" stroke="#2e2e2e" stroke-width="0.30">Satisfaction</text>
<text x="371.5" y="459.7" font-size="14" fill="#2e2e2e" text-anchor="start" font-weight="normal" textLength="15.0" lengthAdjust="spacingAndGlyphs" stroke="#2e2e2e" stroke-width="0.30">A1</text>
<text x="517.6" y="517.0" font-size="14" fill="#2e2e2e" text-anchor="middle" font-weight="normal" textLength="70.5" lengthAdjust="spacingAndGlyphs" stroke="#2e2e2e" stroke-width="0.30">Collect Data</text>
<text x="542.4" y="573.4" font-size="14" fill="#2e2e2e" text-anchor="start" font-weight="normal" textLength="17.0" lengthAdjust="spacingAndGlyphs" stroke="#2e2e2e" stroke-width="0.30">A2</text>
<text x="688.0" y="611.8" font-size="14" fill="#2e2e2e" text-anchor="middle" font-weight="normal" textLength="76.0" lengthAdjust="spacingAndGlyphs" stroke="#2e2e2e" stroke-width="0.30">Process Data</text>
<text x="712.8" y="668.8" font-size="14" fill="#2e2e2e" text-anchor="start" font-weight="normal" textLength="15.5" lengthAdjust="spacingAndGlyphs" stroke="#2e2e2e" stroke-width="0.30">A3</text>
<text x="859.3" y="655.8" font-size="14" fill="#2e2e2e" text-anchor="middle" font-weight="normal" textLength="48.0" lengthAdjust="spacingAndGlyphs" stroke="#2e2e2e" stroke-width="0.30">Produce</text>
<text x="859.3" y="672.2" font-size="14" fill="#2e2e2e" text-anchor="middle" font-weight="normal" textLength="56.5" lengthAdjust="spacingAndGlyphs" stroke="#2e2e2e" stroke-width="0.30">Response</text>
<text x="883.7" y="724.7" font-size="14" fill="#2e2e2e" text-anchor="start" font-weight="normal" textLength="15.5" lengthAdjust="spacingAndGlyphs" stroke="#2e2e2e" stroke-width="0.30">A4</text>
<text x="1030.0" y="674.0" font-size="14" fill="#2e2e2e" text-anchor="middle" font-weight="normal" textLength="71.5" lengthAdjust="spacingAndGlyphs" stroke="#2e2e2e" stroke-width="0.30">Disseminate</text>
<text x="1030.0" y="690.6" font-size="14" fill="#2e2e2e" text-anchor="middle" font-weight="normal" textLength="68.0" lengthAdjust="spacingAndGlyphs" stroke="#2e2e2e" stroke-width="0.30">Intelligence</text>
<text x="1054.4" y="744.4" font-size="14" fill="#2e2e2e" text-anchor="start" font-weight="normal" textLength="15.0" lengthAdjust="spacingAndGlyphs" stroke="#2e2e2e" stroke-width="0.30">A5</text>
<circle cx="394.5" cy="330.6" r="5.6" fill="#f26a5e"/><circle cx="394.5" cy="330.6" r="2.2" fill="#7a4a3a"/>
<circle cx="394.5" cy="349.4" r="5.6" fill="#f26a5e"/><circle cx="394.5" cy="349.4" r="2.2" fill="#7a4a3a"/>
<circle cx="394.5" cy="369.4" r="5.6" fill="#f26a5e"/><circle cx="394.5" cy="369.4" r="2.2" fill="#7a4a3a"/>
<circle cx="394.5" cy="387.8" r="5.6" fill="#f26a5e"/><circle cx="394.5" cy="387.8" r="2.2" fill="#7a4a3a"/>
<circle cx="394.5" cy="406.4" r="5.6" fill="#f26a5e"/><circle cx="394.5" cy="406.4" r="2.2" fill="#7a4a3a"/>
<circle cx="394.5" cy="427.2" r="5.6" fill="#2ec22e"/><circle cx="394.5" cy="427.2" r="2.2" fill="#1a5a1a"/>
<path d="M405.8 444.2 L422.6 425.5 L419.6 437.2 L437.1 418.0" fill="none" stroke="#707070" stroke-width="1.0" stroke-linejoin="round"/>
<text x="442.0" y="417.3" font-size="10" fill="#8c8c8c" text-anchor="start" font-weight="normal" textLength="41.0" lengthAdjust="spacingAndGlyphs" stroke="#8c8c8c" stroke-width="0.30">Prioritized</text>
<text x="442.0" y="427.9" font-size="10" fill="#8c8c8c" text-anchor="start" font-weight="normal" textLength="32.5" lengthAdjust="spacingAndGlyphs" stroke="#8c8c8c" stroke-width="0.30">Request</text>
<path d="M583.5 482.0 L600.8 462.9 L597.6 474.7 L615.6 455.1" fill="none" stroke="#707070" stroke-width="1.0" stroke-linejoin="round"/>
<text x="619.4" y="456.4" font-size="10" fill="#8c8c8c" text-anchor="start" font-weight="normal" textLength="45.0" lengthAdjust="spacingAndGlyphs" stroke="#8c8c8c" stroke-width="0.30">Organically</text>
<text x="619.4" y="466.7" font-size="10" fill="#8c8c8c" text-anchor="start" font-weight="normal" textLength="37.5" lengthAdjust="spacingAndGlyphs" stroke="#8c8c8c" stroke-width="0.30">Collected</text>
<text x="619.4" y="477.5" font-size="10" fill="#8c8c8c" text-anchor="start" font-weight="normal" textLength="19.0" lengthAdjust="spacingAndGlyphs" stroke="#8c8c8c" stroke-width="0.30">Data</text>
<path d="M751.4 596.0 L767.5 577.1 L764.9 588.7 L781.6 569.3" fill="none" stroke="#707070" stroke-width="1.0" stroke-linejoin="round"/>
<text x="757.2" y="554.0" font-size="10" fill="#8c8c8c" text-anchor="start" font-weight="normal" textLength="36.0" lengthAdjust="spacingAndGlyphs" stroke="#8c8c8c" stroke-width="0.30">Relevant</text>
<text x="757.2" y="564.7" font-size="10" fill="#8c8c8c" text-anchor="start" font-weight="normal" textLength="48.5" lengthAdjust="spacingAndGlyphs" stroke="#8c8c8c" stroke-width="0.30">Information</text>
<path d="M925.5 647.0 L942.0 628.1 L939.2 639.8 L956.3 620.3" fill="none" stroke="#707070" stroke-width="1.0" stroke-linejoin="round"/>
<text x="950.9" y="604.7" font-size="10" fill="#8c8c8c" text-anchor="start" font-weight="normal" textLength="48.0" lengthAdjust="spacingAndGlyphs" stroke="#8c8c8c" stroke-width="0.30">Intelligence</text>
<text x="950.9" y="615.2" font-size="10" fill="#8c8c8c" text-anchor="start" font-weight="normal" textLength="39.5" lengthAdjust="spacingAndGlyphs" stroke="#8c8c8c" stroke-width="0.30">Response</text>
<path d="M266 624 L285.2 605 L281.6 615.9 L299.5 596.5" fill="none" stroke="#6a6a6a" stroke-width="1.1" stroke-linejoin="round"/>
<text x="279.7" y="581.9" font-size="10" fill="#8c8c8c" text-anchor="start" font-weight="normal" textLength="39.0" lengthAdjust="spacingAndGlyphs" stroke="#8c8c8c" stroke-width="0.30">Identified</text>
<text x="279.7" y="592.0" font-size="10" fill="#8c8c8c" text-anchor="start" font-weight="normal" textLength="26.5" lengthAdjust="spacingAndGlyphs" stroke="#8c8c8c" stroke-width="0.30">Assets</text>
<path d="M337.4 653.5 L358.5 673.5 L353.5 661.1 L375.4 681.6" fill="none" stroke="#707070" stroke-width="1.0" stroke-linejoin="round"/>
<text x="381.3" y="679.9" font-size="10" fill="#8c8c8c" text-anchor="start" font-weight="normal" textLength="19.5" lengthAdjust="spacingAndGlyphs" stroke="#8c8c8c" stroke-width="0.30">Data</text>
<text x="381.3" y="690.9" font-size="10" fill="#8c8c8c" text-anchor="start" font-weight="normal" textLength="36.0" lengthAdjust="spacingAndGlyphs" stroke="#8c8c8c" stroke-width="0.30">Holdings</text>
<path d="M337.4 694.8 L358.5 715.2 L353.6 702.7 L375.4 723.6" fill="none" stroke="#707070" stroke-width="1.0" stroke-linejoin="round"/>
<text x="380.2" y="729.5" font-size="10" fill="#8c8c8c" text-anchor="start" font-weight="normal" textLength="48.0" lengthAdjust="spacingAndGlyphs" stroke="#8c8c8c" stroke-width="0.30">Information</text>
<text x="380.2" y="739.5" font-size="10" fill="#8c8c8c" text-anchor="start" font-weight="normal" textLength="35.5" lengthAdjust="spacingAndGlyphs" stroke="#8c8c8c" stroke-width="0.30">Holdings</text>
<path d="M380.0 786.4 L395.8 802.5 L393.0 791.7 L409.4 808.2" fill="none" stroke="#707070" stroke-width="1.0" stroke-linejoin="round"/>
<text x="386.0" y="822.4" font-size="10" fill="#8c8c8c" text-anchor="start" font-weight="normal" textLength="47.5" lengthAdjust="spacingAndGlyphs" stroke="#8c8c8c" stroke-width="0.30">Task Status</text>
<path d="M278 833.6 H1222 M348.4 833.6 V866 M954.4 833.6 V866" stroke="#9a9a9a" stroke-width="1.5" fill="none"/>
<text x="352.4" y="846.5" font-size="12.5" fill="#8a8a8a" text-anchor="start" font-weight="normal" textLength="27.5" lengthAdjust="spacingAndGlyphs" stroke="#8a8a8a" stroke-width="0.30">Title:</text>
<text x="503.0" y="863.3" font-size="16" fill="#222" text-anchor="start" font-weight="normal" textLength="297.0" lengthAdjust="spacingAndGlyphs" stroke="#222" stroke-width="0.30">Provide Intelligence to Military Operations</text>
<text x="957.5" y="846.5" font-size="12.5" fill="#8a8a8a" text-anchor="start" font-weight="normal" textLength="56.0" lengthAdjust="spacingAndGlyphs" stroke="#8a8a8a" stroke-width="0.30">Viewpoint:</text>
<text x="1002.5" y="863.3" font-size="16" fill="#222" text-anchor="start" font-weight="normal" textLength="178.0" lengthAdjust="spacingAndGlyphs" stroke="#222" stroke-width="0.30">Commander, Intelligence</text></g></svg>
<!-- RIGHT PANEL -->
<div class="rp"></div>
<svg class="a" style="left:1222px;top:79px" width="278" height="799" viewBox="1222 79 278 799" font-family='"Liberation Sans",sans-serif'>
<rect x="1222" y="79" width="13" height="799" fill="#f2f2f2"/>
<path d="M1222.5 79 V866" stroke="#e2e2e2"/>
<rect x="1224.5" y="105" width="7.5" height="717" rx="3.7" fill="#c2c2c2"/>
<path d="M1234.5 79 V878" stroke="#c8c8c8"/>
<rect x="1235" y="80.7" width="265" height="24" fill="#f0f0f0"/>
<path d="M1235 104.5 H1500" stroke="#cfcfcf"/>
<path d="M1235 80.5 H1500" stroke="#e0e0e0"/>
<rect x="1235" y="80.7" width="88.5" height="24" fill="#1a8af0"/>
<path d="M1412.5 81 V104" stroke="#d0d0d0"/>
<text x="1279.5" y="96.5" font-size="11" fill="#fff" text-anchor="middle">Arrange &amp; Size</text>
<text x="1367.5" y="97" font-size="11.5" fill="#222" text-anchor="middle">Format</text>
<text x="1456" y="97" font-size="11.5" fill="#222" text-anchor="middle">Text</text>
<path d="M1242 115.7 l6.5 0 l-3.25 5.5z" fill="#777"/><text x="1254.5" y="121.2" font-size="10.5" fill="#333">Order</text><path d="M1283.0 122.1 H1491" stroke="#dcdcdc"/><path d="M1242 172.5 l6.5 0 l-3.25 5.5z" fill="#777"/><text x="1254.5" y="178.0" font-size="10.5" fill="#333">Align and Distribute</text><path d="M1348.0 178.9 H1491" stroke="#dcdcdc"/><path d="M1242 253.9 l6.5 0 l-3.25 5.5z" fill="#777"/><text x="1254.5" y="259.4" font-size="10.5" fill="#333">Size</text><path d="M1276.0 260.8 H1491" stroke="#dcdcdc"/><path d="M1242 319.0 l6.5 0 l-3.25 5.5z" fill="#777"/><text x="1254.5" y="324.5" font-size="10.5" fill="#333">Position</text><path d="M1302.0 325.5 H1491" stroke="#dcdcdc"/><path d="M1242 397.0 l6.5 0 l-3.25 5.5z" fill="#777"/><text x="1254.5" y="402.5" font-size="10.5" fill="#333">Rotate and Flip</text><path d="M1323.0 403.5 H1491" stroke="#dcdcdc"/><path d="M1242 473.0 l6.5 0 l-3.25 5.5z" fill="#777"/><text x="1254.5" y="478.5" font-size="10.5" fill="#333">Group and Lock</text><path d="M1330.0 479.5 H1491" stroke="#dcdcdc"/><path d="M1242 531.0 l6.5 0 l-3.25 5.5z" fill="#777"/><text x="1254.5" y="536.5" font-size="10.5" fill="#333">Make Same</text><path d="M1311.0 537.5 H1491" stroke="#dcdcdc"/><text x="1266.9" y="154.5" font-size="8.8" fill="#555" text-anchor="middle">Back</text><text x="1307.8" y="154.5" font-size="8.8" fill="#555" text-anchor="middle">Front</text><text x="1348.8" y="154.5" font-size="8.8" fill="#555" text-anchor="middle">Backward</text><text x="1389.6" y="154.5" font-size="8.8" fill="#555" text-anchor="middle">Forward</text><g stroke-width="1">
<rect x="1262" y="130" width="6" height="6" fill="#fff" stroke="#2a62b8"/><rect x="1265" y="133" width="4" height="4" fill="#5ad02a"/><rect x="1266.5" y="135" width="6" height="6" fill="#fff" stroke="#2a62b8"/>
<rect x="1303" y="130" width="6" height="6" fill="#fff" stroke="#2a62b8"/><rect x="1305" y="132" width="6" height="6" fill="#7ee05a" stroke="#2a9a18"/><rect x="1307.5" y="135" width="6" height="6" fill="none" stroke="#2a62b8"/>
<rect x="1344" y="130" width="7" height="7" fill="#5a8ad8" stroke="#1f4f99"/><rect x="1348" y="134" width="7" height="7" fill="#6cd02a" stroke="#2a8a18"/>
<rect x="1385" y="130" width="7" height="7" fill="#5a8ad8" stroke="#1f4f99"/><rect x="1388.5" y="133.5" width="7.5" height="7.5" fill="#6cd02a" stroke="#2a8a18"/>
</g><rect x="1293" y="188" width="29" height="15" rx="3" fill="#c8c8c8"/><text x="1266.0" y="214.9" font-size="8.8" fill="#555" text-anchor="middle">Left</text><text x="1307.8" y="214.9" font-size="8.8" fill="#555" text-anchor="middle">Center</text><text x="1348.0" y="214.9" font-size="8.8" fill="#555" text-anchor="middle">Right</text><text x="1389.6" y="214.9" font-size="8.8" fill="#555" text-anchor="middle">Top</text><text x="1430.8" y="214.9" font-size="8.8" fill="#555" text-anchor="middle">Middle</text><text x="1471.5" y="214.9" font-size="8.8" fill="#555" text-anchor="middle">Bottom</text><g stroke-width="0.8">
<path d="M1262 189 V202" stroke="#e8502a" stroke-width="1.2"/><rect x="1263" y="189" width="5" height="5" fill="#5a8ad8" stroke="#1f4f99"/><rect x="1263" y="195" width="7" height="6" fill="#6cd02a" stroke="#2a8a18"/>
<rect x="1305" y="189" width="5" height="5" fill="#5a8ad8" stroke="#1f4f99"/><rect x="1304.5" y="195" width="7" height="6" fill="#6cd02a" stroke="#2a8a18"/><path d="M1307.8 188 V203" stroke="#e8502a" stroke-width="1"/>
<path d="M1352 189 V202" stroke="#e8502a" stroke-width="1.2"/><rect x="1346" y="189" width="5" height="5" fill="#5a8ad8" stroke="#1f4f99"/><rect x="1344" y="195" width="7" height="6" fill="#6cd02a" stroke="#2a8a18"/>
<path d="M1383 190 H1396" stroke="#e8502a" stroke-width="1.2"/><rect x="1383.5" y="191" width="5" height="5" fill="#5a8ad8" stroke="#1f4f99"/><rect x="1389.5" y="191" width="6" height="8" fill="#6cd02a" stroke="#2a8a18"/>
<rect x="1424" y="193" width="5" height="5" fill="#5a8ad8" stroke="#1f4f99"/><rect x="1430" y="192" width="6" height="7" fill="#6cd02a" stroke="#2a8a18"/><path d="M1423 195.5 H1437" stroke="#e8502a" stroke-width="1.2"/>
<rect x="1465" y="194" width="5" height="5" fill="#5a8ad8" stroke="#1f4f99"/><rect x="1471" y="191" width="6" height="8" fill="#6cd02a" stroke="#2a8a18"/><path d="M1464 200.5 H1478" stroke="#e8502a" stroke-width="1.2"/>
</g><rect x="1255.6" y="222.6" width="109.7" height="15" rx="3.5" fill="#fff" stroke="#c8c8c8"/><path d="M1352.8 222.6 h9.0 a3.5 3.5 0 0 1 3.5 3.5 v8 a3.5 3.5 0 0 1 -3.5 3.5 h-9.0z" fill="#2f8cf2"/><path d="M1356.8 228.6 l2.2 -2.2 l2.2 2.2 M1356.8 232.1 l2.2 2.2 l2.2 -2.2" stroke="#fff" stroke-width="1" fill="none"/><text x="1285.8" y="233.6" font-size="10.5" fill="#222">Horizontal</text><rect x="1378.5" y="222.6" width="110.1" height="15" rx="3.5" fill="#fff" stroke="#c8c8c8"/><path d="M1476.1 222.6 h9.0 a3.5 3.5 0 0 1 3.5 3.5 v8 a3.5 3.5 0 0 1 -3.5 3.5 h-9.0z" fill="#2f8cf2"/><path d="M1480.1 228.6 l2.2 -2.2 l2.2 2.2 M1480.1 232.1 l2.2 2.2 l2.2 -2.2" stroke="#fff" stroke-width="1" fill="none"/><text x="1408.0" y="233.6" font-size="10.5" fill="#222">Vertical</text><g stroke-width="0.8"><rect x="1264" y="227" width="5" height="5" fill="#5a8ad8" stroke="#1f4f99"/><rect x="1270" y="225" width="5" height="5" fill="#6cd02a" stroke="#2a8a18"/><path d="M1268 224 V236 M1270 224 V236" stroke="#e8502a"/><rect x="1390" y="224" width="5" height="5" fill="#5a8ad8" stroke="#1f4f99"/><rect x="1395" y="231" width="5" height="5" fill="#6cd02a" stroke="#2a8a18"/><path d="M1387 229.5 H1402 M1387 231 H1402" stroke="#e8502a"/></g><text x="1254.5" y="277.9" font-size="10.5" fill="#333">Lenght</text><rect x="1293.4" y="265.8" width="58.4" height="15.7" fill="#fff" stroke="#cfcfcf"/><text x="1297.4" y="277.3" font-size="10.5" fill="#222">189.9 mm</text><rect x="1354.9" y="265.8" width="8" height="16" rx="4" fill="#fff" stroke="#cfcfcf"/><path d="M1356.9 271.8 l2 -2 l2 2 M1356.9 275.8 l2 2 l2 -2" stroke="#444" stroke-width="0.9" fill="none"/><text x="1254.5" y="297.7" font-size="10.5" fill="#333">Height</text><rect x="1293.4" y="285.8" width="58.4" height="15.7" fill="#fff" stroke="#cfcfcf"/><text x="1297.4" y="297.3" font-size="10.5" fill="#222">0 mm</text><rect x="1354.9" y="285.8" width="8" height="16" rx="4" fill="#fff" stroke="#cfcfcf"/><path d="M1356.9 291.8 l2 -2 l2 2 M1356.9 295.8 l2 2 l2 -2" stroke="#444" stroke-width="0.9" fill="none"/><rect x="1378.5" y="266" width="9.5" height="9.5" rx="2" fill="#fff" stroke="#d4d4d4"/><text x="1392.5" y="274.5" font-size="10" fill="#bbb">Lock Proportions</text><text x="1256" y="344.5" font-size="10.5" fill="#333">X</text><rect x="1293.4" y="333.0" width="58.4" height="15.7" fill="#fff" stroke="#cfcfcf"/><text x="1297.4" y="344.5" font-size="10.5" fill="#222">75.2 mm</text><rect x="1354.9" y="333.0" width="8" height="16" rx="4" fill="#fff" stroke="#cfcfcf"/><path d="M1356.9 339.0 l2 -2 l2 2 M1356.9 343.0 l2 2 l2 -2" stroke="#444" stroke-width="0.9" fill="none"/><rect x="1375.5" y="333.0" width="58.4" height="15.7" fill="#fff" stroke="#cfcfcf"/><text x="1379.5" y="344.5" font-size="10.5" fill="#222">265.1 mm</text><rect x="1437.0" y="333.0" width="8" height="16" rx="4" fill="#fff" stroke="#cfcfcf"/><path d="M1439.0 339.0 l2 -2 l2 2 M1439.0 343.0 l2 2 l2 -2" stroke="#444" stroke-width="0.9" fill="none"/><text x="1256" y="364.5" font-size="10.5" fill="#333">Y</text><rect x="1293.4" y="352.5" width="58.4" height="15.7" fill="#fff" stroke="#cfcfcf"/><text x="1297.4" y="364.0" font-size="10.5" fill="#222">92.9 mm</text><rect x="1354.9" y="352.5" width="8" height="16" rx="4" fill="#fff" stroke="#cfcfcf"/><path d="M1356.9 358.5 l2 -2 l2 2 M1356.9 362.5 l2 2 l2 -2" stroke="#444" stroke-width="0.9" fill="none"/><rect x="1375.5" y="352.5" width="58.4" height="15.7" fill="#fff" stroke="#cfcfcf"/><text x="1379.5" y="364.0" font-size="10.5" fill="#bbb">92.9 mm</text><rect x="1437.0" y="352.5" width="8" height="16" rx="4" fill="#fff" stroke="#cfcfcf"/><path d="M1439.0 358.5 l2 -2 l2 2 M1439.0 362.5 l2 2 l2 -2" stroke="#ccc" stroke-width="0.9" fill="none"/><text x="1325" y="381" font-size="10.5" fill="#333" text-anchor="middle">Begin</text><text x="1406" y="381" font-size="10.5" fill="#333" text-anchor="middle">End</text><text x="1251" y="421" font-size="10.5" fill="#333">Angle</text><rect x="1293.4" y="409.5" width="58.4" height="15.7" fill="#fff" stroke="#cfcfcf"/><text x="1297.4" y="421.0" font-size="10.5" fill="#222">0.00 deg</text><rect x="1354.9" y="409.5" width="8" height="16" rx="4" fill="#fff" stroke="#cfcfcf"/><path d="M1356.9 415.5 l2 -2 l2 2 M1356.9 419.5 l2 2 l2 -2" stroke="#444" stroke-width="0.9" fill="none"/><text x="1266.0" y="454.8" font-size="8.8" fill="#555" text-anchor="middle">90º CW</text><text x="1307.0" y="454.8" font-size="8.8" fill="#555" text-anchor="middle">90º CCW</text><text x="1348.0" y="454.8" font-size="8.8" fill="#555" text-anchor="middle">180º</text><text x="1428.0" y="454.8" font-size="8.8" fill="#555" text-anchor="middle">Vertical</text><text x="1468.0" y="454.8" font-size="8.8" fill="#555" text-anchor="middle">Horizontal</text><text x="1385" y="443" font-size="10.5" fill="#333" text-anchor="middle">Flip</text><g stroke-width="1">
<path d="M1258 444 L1265 436 L1265 444z" fill="#7ab0ea" stroke="#1f5fb0"/><path d="M1267 444 L1267 436 L1275 444z" fill="#3a7ad0" stroke="#1f5fb0"/><path d="M1259 437 Q1263 432 1269 434" stroke="#1f8ae0" stroke-width="1.5" fill="none"/>
<path d="M1299 444 L1306 436 L1306 444z" fill="#3a7ad0" stroke="#1f5fb0"/><path d="M1308 444 L1308 436 L1316 444z" fill="#7ab0ea" stroke="#1f5fb0"/><path d="M1307 434 Q1313 432 1316 437" stroke="#1f8ae0" stroke-width="1.5" fill="none"/>
<path d="M1343 444 L1350 434 L1350 444z" fill="#3a7ad0" stroke="#1f5fb0"/><path d="M1347 444 L1354 434 L1347 434z" fill="#7ab0ea" stroke="#1f5fb0"/><path d="M1339 438 v5 h3 M1356 440 v-6 h-3" stroke="#1f8ae0" stroke-width="1.5" fill="none"/>
<path d="M1421 440 L1431 435 L1431 445z" fill="#7ab0ea" stroke="#1f5fb0"/><path d="M1435 435 v10" stroke="#1f8ae0" stroke-width="1.5"/>
<path d="M1463 441 L1471 433 L1479 441z" fill="#7ab0ea" stroke="#1f5fb0"/><path d="M1463 444 h16" stroke="#1f8ae0" stroke-width="1.5"/>
</g><text x="1262.0" y="512.5" font-size="8.8" fill="#555" text-anchor="middle">Group</text><text x="1304.0" y="512.5" font-size="8.8" fill="#555" text-anchor="middle">UnGroup</text><text x="1343.0" y="512.5" font-size="8.8" fill="#555" text-anchor="middle">Lock</text><text x="1385.0" y="512.5" font-size="8.8" fill="#555" text-anchor="middle">UnLock</text><g>
<rect x="1256.5" y="487.5" width="8" height="8" fill="none" stroke="#2a62b8"/><rect x="1259.5" y="490.5" width="8" height="8" fill="none" stroke="#2a62b8"/><rect x="1255" y="486" width="2.5" height="2.5" fill="#3ab02a"/><rect x="1266" y="486" width="2.5" height="2.5" fill="#3ab02a"/><rect x="1255" y="497" width="2.5" height="2.5" fill="#3ab02a"/><rect x="1266" y="497" width="2.5" height="2.5" fill="#3ab02a"/>
<rect x="1298.5" y="487.5" width="8" height="8" fill="none" stroke="#8ac0a0"/><rect x="1301.5" y="490.5" width="8" height="8" fill="none" stroke="#8ab0d8"/><rect x="1297" y="486" width="2.5" height="2.5" fill="#8ad08a"/><rect x="1308" y="497" width="2.5" height="2.5" fill="#8ad08a"/>
<path d="M1340 492 v-2 a3.5 3.5 0 0 1 7 0 v2" stroke="#777" stroke-width="1.3" fill="none"/><rect x="1338.5" y="492" width="10" height="7.5" fill="#6a7f9a"/>
<path d="M1381 491 v-2 a3.5 3.5 0 0 1 7 0" stroke="#bbb" stroke-width="1.3" fill="none"/><rect x="1381" y="492.5" width="10" height="7.5" fill="#c5ced8"/>
</g><text x="1266.0" y="569.5" font-size="8.8" fill="#555" text-anchor="middle">Size</text><text x="1307.0" y="569.5" font-size="8.8" fill="#555" text-anchor="middle">Width</text><text x="1350.0" y="569.5" font-size="8.8" fill="#555" text-anchor="middle">Height</text><g>
<rect x="1260" y="546" width="12" height="12" fill="#3a7ad0" stroke="#1f4f99"/><rect x="1263" y="549" width="6" height="6" fill="#6cd02a"/>
<rect x="1301" y="551" width="12" height="7" fill="#7ab0ea" stroke="#1f5fb0"/><rect x="1304" y="546" width="6" height="3.5" fill="#6cd02a" stroke="#2a8a18" stroke-width="0.6"/>
<rect x="1348" y="546" width="7" height="12" fill="#7ab0ea" stroke="#1f5fb0"/><rect x="1342.5" y="549" width="3.5" height="6" fill="#6cd02a" stroke="#2a8a18" stroke-width="0.6"/>
</g></svg>
<!-- STATUS -->
<svg class="a" style="left:278px;top:865px" width="957" height="13" viewBox="278 865 957 13">
<rect x="278" y="865.5" width="957" height="13" fill="#f6f6f6"/>
<path d="M278 865.8 H1222" stroke="#e6e6e6"/>
<rect x="294.5" y="866" width="81" height="14" fill="#fff" stroke="#cdcdcd"/>
<text x="298" y="876.5" font-size="9.5" fill="#222" font-family='"Liberation Sans",sans-serif'>100%</text>
<path d="M366 871 l2 -2 l2 2 M366 874 l2 2 l2 -2" stroke="#333" stroke-width="0.9" fill="none"/>
<rect x="511.5" y="869.5" width="665" height="6.5" rx="3.2" fill="#c2c2c2"/>
<rect x="1212" y="867" width="11.5" height="10.5" fill="#c9cdd6"/>
<path d="M1214 872 l2 -2 v4z M1221.5 872 l-2 -2 v4z M1217.7 868.2 l-2 2 h4z M1217.7 875.8 l-2 -2 h4z" fill="#2a5ab8"/>
<rect x="1225.5" y="867" width="8.5" height="10.5" fill="#c9cdd6"/><rect x="1227.5" y="869" width="4.5" height="6.5" fill="#fff" stroke="#5a7ab8" stroke-width="0.7"/>
</svg>
<div class="status"><span style="position:absolute;left:11.5px;top:0px;font-size:10.2px;color:#222">Ready</span></div>
</body></html>
